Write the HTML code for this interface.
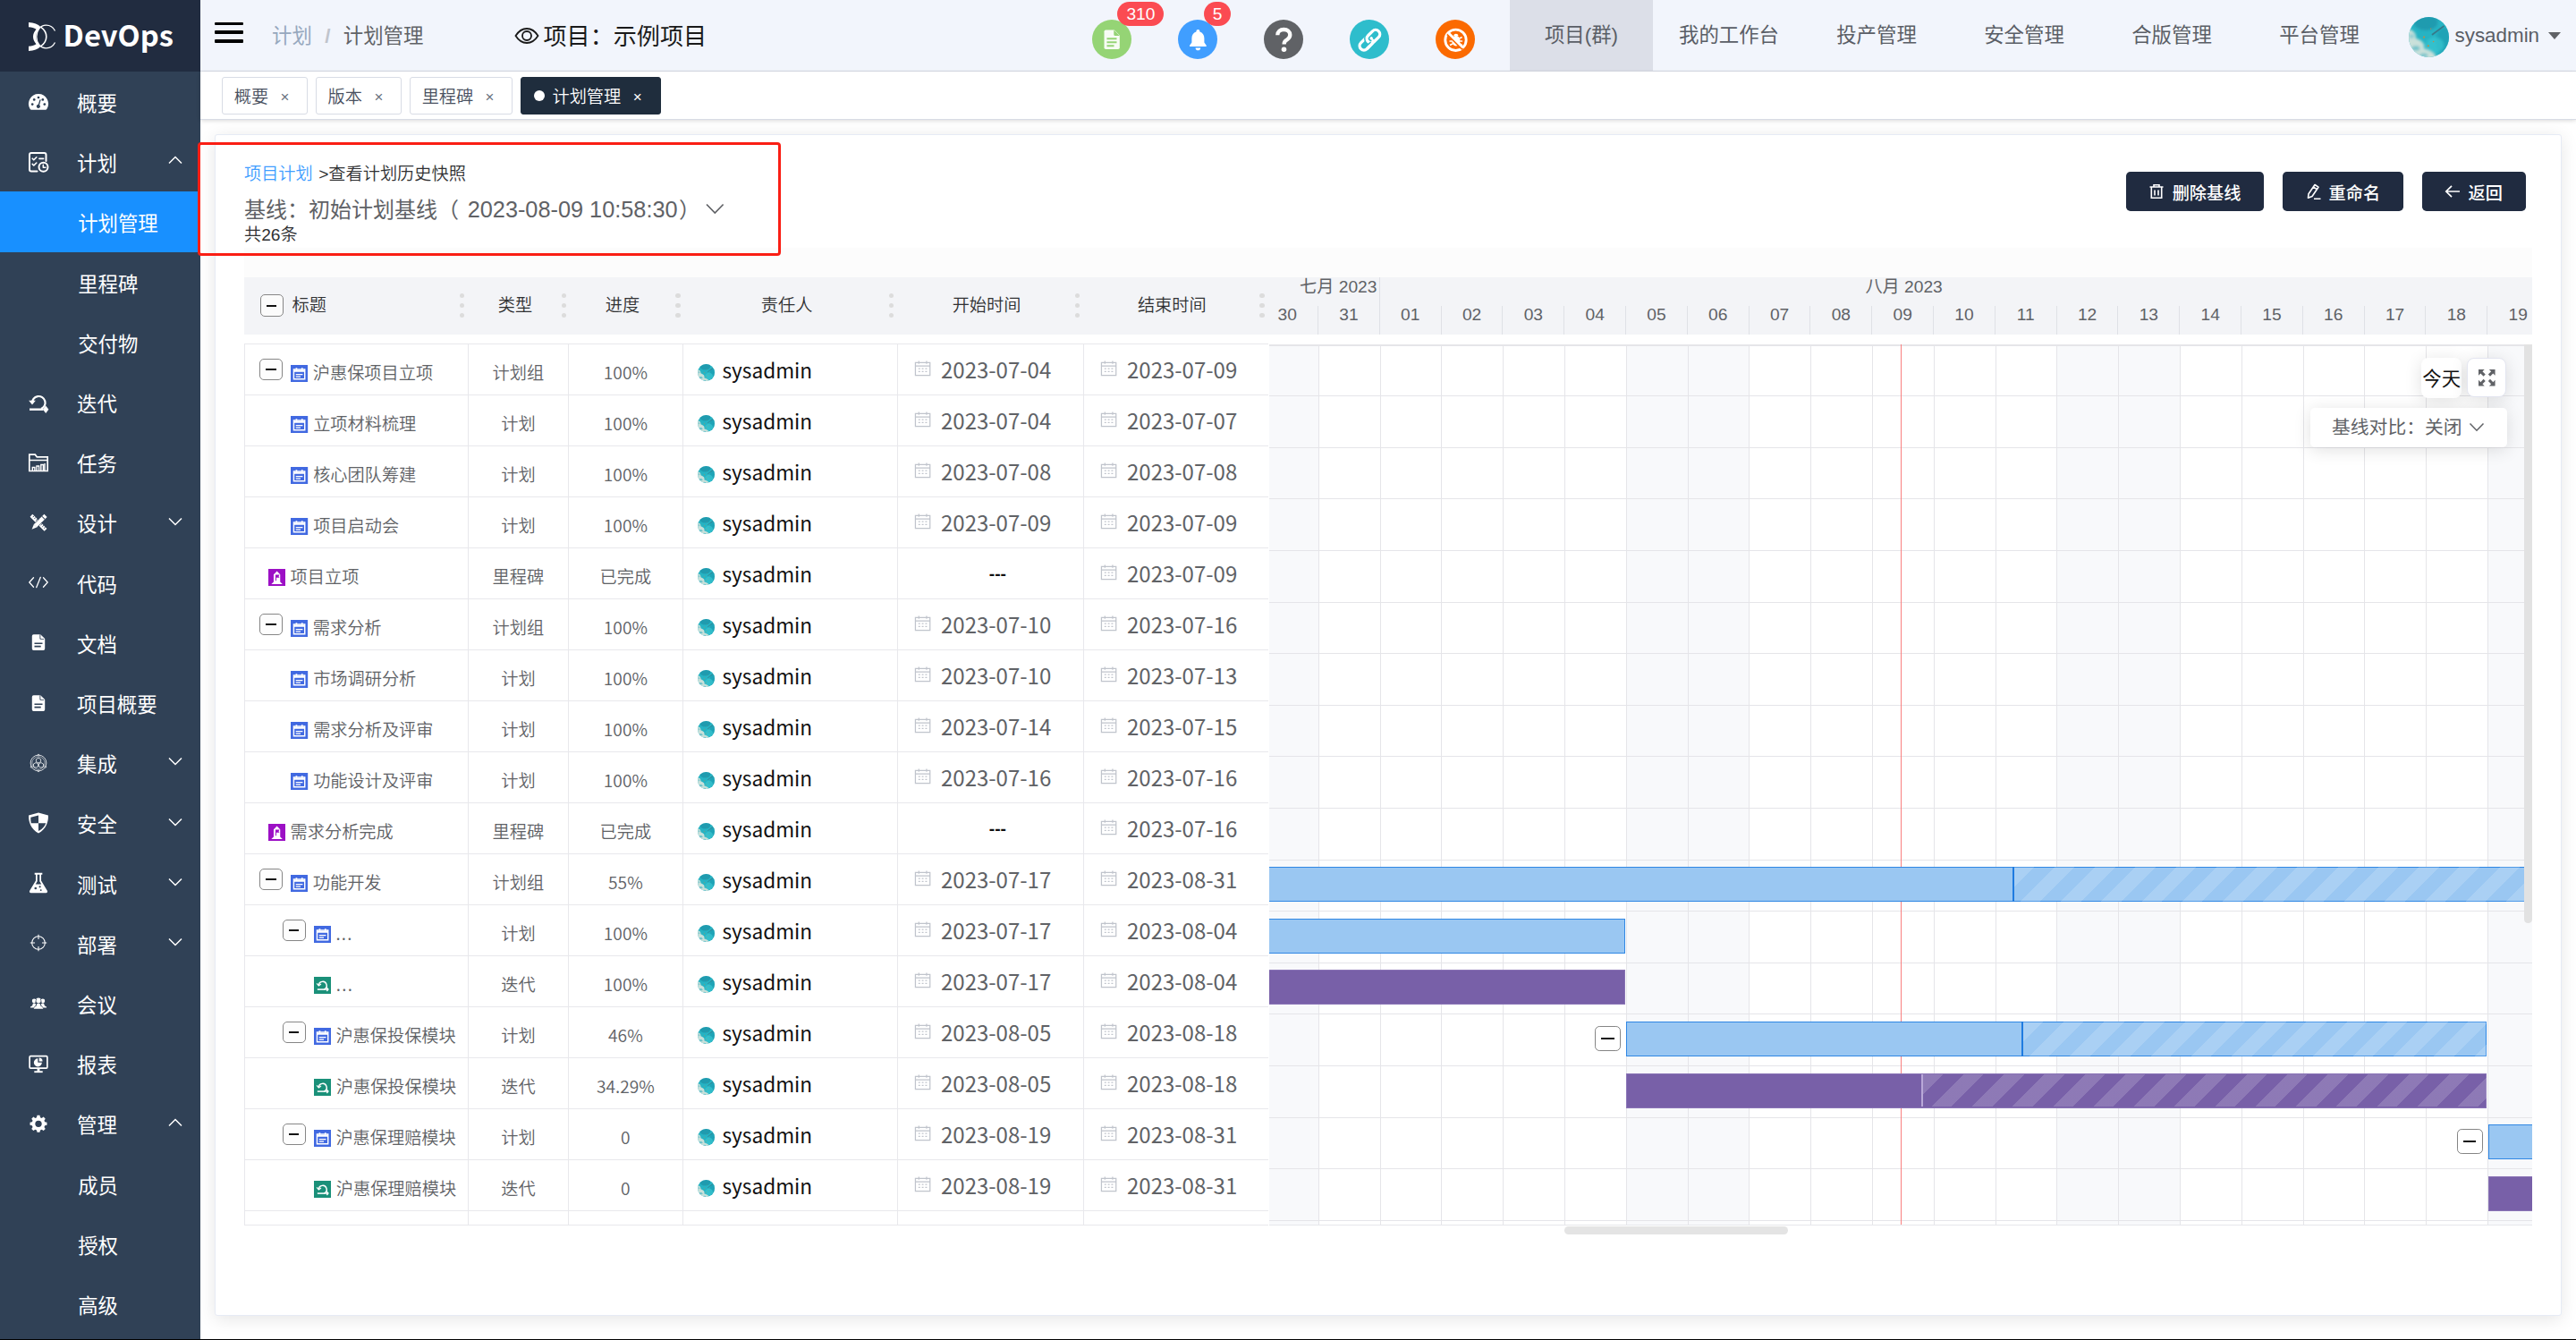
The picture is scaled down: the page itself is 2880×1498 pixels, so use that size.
<!DOCTYPE html>
<html lang="zh-CN">
<head>
<meta charset="utf-8">
<title>计划管理 - DevOps</title>
<style>
*{box-sizing:border-box}
html,body{margin:0;padding:0}
body{width:2880px;height:1498px;overflow:hidden;background:#fff;position:relative;
 font-family:"Liberation Sans","Noto Sans CJK SC",sans-serif;font-size:22.4px;color:#606266}
.abs{position:absolute}
.yh{font-family:"Noto Sans CJK SC","Liberation Sans",sans-serif}
/* sidebar */
#side{position:absolute;left:0;top:0;width:224px;height:1498px;background:#304156}
#logo{position:absolute;left:0;top:0;width:224px;height:80px;background:#212c40}
#logo .t{position:absolute;left:70.6px;top:15px;font:700 32.7px/46px "Noto Sans CJK SC","Liberation Sans",sans-serif;color:#fff;letter-spacing:0}
.mi{position:absolute;left:0;width:224px;height:67.2px;color:#fff;font-size:22.4px;line-height:67.2px;font-family:"Noto Sans CJK SC",sans-serif;font-weight:400}
.mi .tx{position:absolute;left:86px;top:1px;white-space:nowrap}
.mi.sub .tx{left:87.2px}
.mi.act{background:#1890ff}
.mi svg.ic{position:absolute;left:31px;top:21.6px;width:24px;height:24px}
.mi svg.ar{position:absolute;left:188px;top:24.2px;width:16px;height:16px}
/* header */
#hdr{position:absolute;left:224px;top:0;width:2656px;height:80px;background:#f2f5fc;border-bottom:1px solid #d8dce5}
#tags{position:absolute;left:224px;top:80px;width:2656px;height:54.4px;background:#fff;border-bottom:1px solid #d8dce5;box-shadow:0 1.6px 4.8px 0 rgba(0,0,0,.12),0 0 4.8px 0 rgba(0,0,0,.04)}
.tag{font-weight:350;position:absolute;top:6.4px;height:41.6px;border:1px solid #d8dce5;border-radius:3px;background:#fff;color:#495060;font-size:19.2px;line-height:39.6px;white-space:nowrap}
.tag.on{background:#1f2d3d;border-color:#1f2d3d;color:#fff}
.nav{position:absolute;top:0;height:79px;width:160px;text-align:center;line-height:80px;font-size:22.4px;color:#5a5e66}
.nav.on{background:#dcdfe8}
.circ{position:absolute;top:22.3px;width:44px;height:44px;border-radius:50%}
.badge{position:absolute;height:27.4px;line-height:25.4px;border-radius:16px;background:#fb4b52;color:#fff;font-size:19.2px;padding:0 9.6px;text-align:center;border:1px solid #fff0}
/* card */
#card{position:absolute;left:240px;top:150.4px;width:2624px;height:1320.6px;background:#fff;border:1px solid #e6ebf5;border-radius:3px;box-shadow:0 3.2px 19.2px 0 rgba(0,0,0,.1)}
#redbox{position:absolute;left:221px;top:159px;width:652px;height:127px;border:3px solid #fa1e14;border-radius:4px}
.btn{position:absolute;top:192px;height:44px;background:#202b40;border-radius:4.8px;color:#fff;font-size:19.2px;font-weight:500;font-family:"Noto Sans CJK SC",sans-serif;line-height:44px;white-space:nowrap}
/* table */
.th{position:absolute;top:309.6px;height:64px;line-height:64px;font-size:19.2px;font-weight:350;color:#303133;white-space:nowrap}
.dots{position:absolute;top:327.5px;width:6px;height:28px}
.dots i{position:absolute;left:0;width:5.6px;height:5.6px;border-radius:50%;background:#dcdcdc}
.cell{position:absolute;white-space:nowrap;font-size:19.2px;font-weight:350;color:#606266;font-family:"Noto Sans CJK SC","Liberation Sans",sans-serif}
.hl{position:absolute;height:1px;background:#e8e8ec}
.vl{position:absolute;width:1px;background:#e8e8ec}
.exp{position:absolute;width:25.8px;height:24.8px;border:1.4px solid #868686;border-radius:5px;background:#fdfdfd}
.exp:after{content:"";position:absolute;left:5.7px;top:10.6px;width:11.6px;height:2px;background:#111}
.av{position:absolute;width:19.6px;height:19.6px;border-radius:50%;overflow:hidden}
</style>
</head>
<body>

<svg width="0" height="0" style="position:absolute"><defs><filter id="bl" x="-20%" y="-20%" width="140%" height="140%"><feGaussianBlur stdDeviation=".8"/></filter></defs></svg>
<div id="side">
<div id="logo"><svg class="abs" style="left:30px;top:24px;width:34px;height:34px" viewBox="0 0 34 34"><path fill="#fff" d="M2 1c6 .2 10.500 2 13.500 5.200C12 9.500 10 13 10 17s2 7.500 5.500 10.800C12.500 31 8 32.800 2 33v-5.300c3.500-.2 6.300-1 8.500-2.500C8.300 22.600 7 20 7 17s1.300-5.600 3.500-8.200C8.300 7.300 5.500 6.500 2 6.300z"/><path fill="none" stroke="#fff" stroke-width="1.300" d="M31.500 10.500C29.500 6.500 26 4.200 21.500 4.200 15 4.200 10.800 10 10.800 17s4.200 12.800 10.700 12.800c4.500 0 8-2.300 10-6.300"/><path fill="none" stroke="#fff" stroke-width="1.600" d="M15.500 6.200C19.500 9 21.800 12.800 21.800 17s-2.300 8-6.300 10.800"/></svg><div class="t">DevOps</div></div>
<div class="mi" style="top:80.0px"><svg class="ic" viewBox="0 0 24 24" ><path fill="#fff" d="M12 3A11 11 0 0 0 2.7 19.9c.3.5.8.8 1.4.8h15.8c.6 0 1.1-.3 1.4-.8A11 11 0 0 0 12 3z"/><g fill="#304156"><circle cx="5.2" cy="14.6" r="1.35"/><circle cx="7.2" cy="9.4" r="1.35"/><circle cx="12" cy="7" r="1.35"/><circle cx="16.8" cy="9.4" r="1.35"/><circle cx="18.8" cy="14.6" r="1.35"/><path d="M13.5 9.2l1.2.4-1.6 5.6a2.1 2.1 0 1 1-1.3-.4z"/></g></svg><span class="tx">概要</span></div>
<div class="mi" style="top:147.2px"><svg class="ic" viewBox="0 0 24 24" ><g fill="none" stroke="#fff" stroke-width="2" stroke-linecap="round" stroke-linejoin="round"><path d="M10.5 22.5H4a2 2 0 0 1-2-2V4a2 2 0 0 1 2-2h14.5a2 2 0 0 1 2 2v7"/><circle cx="17.5" cy="17.8" r="5"/><path d="M17.3 15.3v3h2.6" stroke-width="1.5"/><path d="M5.2 8.2l1.6 1.6 3-3M5.2 14.4l1.6 1.6 3-3" stroke-width="1.6"/><path d="M13 8.3h4.5" stroke-width="1.8"/></g></svg><span class="tx">计划</span><svg class="ar" viewBox="0 0 16 16"><path d="M1 11.500l7-7 7 7" fill="none" stroke="#fff" stroke-width="1.500"/></svg></div>
<div class="mi sub act" style="top:214.4px"><span class="tx">计划管理</span></div>
<div class="mi sub" style="top:281.6px"><span class="tx">里程碑</span></div>
<div class="mi sub" style="top:348.8px"><span class="tx">交付物</span></div>
<div class="mi" style="top:416.0px"><svg class="ic" viewBox="0 0 24 24" ><g fill="none" stroke="#fff" stroke-width="2.200"><path d="M5 12.800a7.300 7.300 0 1 1 10 6.300"/><path d="M2 19.700h15.500" stroke-width="2.400"/></g><path d="M1.200 9.800h7.600l-3.800 4.600z" fill="#fff"/><path d="M20.200 15.500l3.200 4.200-3.200 4.200-3.200-4.200z" fill="#fff"/></svg><span class="tx">迭代</span></div>
<div class="mi" style="top:483.2px"><svg class="ic" viewBox="0 0 24 24" ><g fill="none" stroke="#fff" stroke-width="1.7"><path d="M1.8 21.5V3.2h6.5l2 2.6h11.9v15.7z"/><path d="M1.8 9.5h20.4" stroke-width="1.5"/><path d="M5.3 21v-3.5h2.6V21M10 21v-5h2.6v5M14.8 21v-6.5h2.6V21M19 21v-8" stroke-width="1.4"/></g></svg><span class="tx">任务</span></div>
<div class="mi" style="top:550.4px"><svg class="ic" viewBox="0 0 24 24" ><g transform="translate(12 12.300) scale(.84) translate(-12 -12)"><g transform="rotate(45 12 12)"><rect x="9.300" y="-1.500" width="5.400" height="19.500" fill="#fff"/><path d="M9.300 18h5.400L12 24.500z" fill="#fff"/><path d="M9.300 2.800h5.400" stroke="#304156" stroke-width="1.200"/><path d="M9.300 17.200h5.400" stroke="#304156" stroke-width="1"/></g><g transform="rotate(-45 12 12)"><rect x="8.900" y="-2" width="6.200" height="28" fill="#304156"/><rect x="9.600" y="-1.500" width="4.800" height="27" fill="#fff"/><path d="M11.800 1.500h2.600M11.800 4.500h2.600M11.800 7.500h2.600M11.800 16.500h2.600M11.800 19.500h2.600M11.800 22.500h2.600" stroke="#304156" stroke-width="1.100"/></g><g transform="rotate(45 12 12)"><rect x="8.700" y="7" width="6.600" height="10" fill="#304156"/><rect x="9.300" y="6" width="5.400" height="12" fill="#fff"/></g></g></svg><span class="tx">设计</span><svg class="ar" viewBox="0 0 16 16"><path d="M1 4.500l7 7 7-7" fill="none" stroke="#fff" stroke-width="1.500"/></svg></div>
<div class="mi" style="top:617.6px"><svg class="ic" viewBox="0 0 24 24" ><g fill="none" stroke="#fff" stroke-width="1.300" stroke-linecap="round" stroke-linejoin="round"><path d="M6.500 6.800L1.800 12l4.700 5.200M17.500 6.800l4.700 5.200-4.700 5.200M14.300 6.300L9.700 17.700"/></g></svg><span class="tx">代码</span></div>
<div class="mi" style="top:684.8px"><svg class="ic" viewBox="0 0 24 24" ><g transform="translate(12 12) scale(0.9) translate(-12 -12)"><path fill="#fff" d="M6 2.2h8.3l5.7 5.7V20a2 2 0 0 1-2 2H6a2 2 0 0 1-2-2V4.2a2 2 0 0 1 2-2z"/><path fill="#304156" d="M13.6 2.2v5.2a1 1 0 0 0 1 1H20l-1-.0V8L14.3 2.2zM7 12.5h10v1.8H7zM7 16.3h8v1.8H7z"/><path fill="#fff" d="M14.6 2.5l5.1 5.1h-4.3a.8.8 0 0 1-.8-.8z"/></g></svg><span class="tx">文档</span></div>
<div class="mi" style="top:752.0px"><svg class="ic" viewBox="0 0 24 24" ><g transform="translate(12 12) scale(0.9) translate(-12 -12)"><path fill="#fff" d="M6 2.2h8.3l5.7 5.7V20a2 2 0 0 1-2 2H6a2 2 0 0 1-2-2V4.2a2 2 0 0 1 2-2z"/><path fill="#304156" d="M13.6 2.2v5.2a1 1 0 0 0 1 1H20l-1-.0V8L14.3 2.2zM7 12.5h10v1.8H7zM7 16.3h8v1.8H7z"/><path fill="#fff" d="M14.6 2.5l5.1 5.1h-4.3a.8.8 0 0 1-.8-.8z"/></g></svg><span class="tx">项目概要</span></div>
<div class="mi" style="top:819.2px"><svg class="ic" viewBox="0 0 24 24" ><g transform="translate(12 12) scale(0.87) translate(-12 -12)"><g fill="none" stroke="#fff" stroke-width="0.9"><circle cx="12" cy="12" r="10.2"/><circle cx="12" cy="12" r="8.2" stroke-width=".6"/><path d="M12 5.5l3 1.6v3.3l-3 1.6-3-1.6V7.100zM8.700 11.5l3 1.600v3.300l-3 1.600-3-1.600v-3.300zM15.300 11.500l3 1.600v3.300l-3 1.600-3-1.600v-3.300z" stroke-width=".9"/><circle cx="12" cy="1.800" r="1" fill="#304156"/><circle cx="3" cy="17" r="1" fill="#304156"/><circle cx="21" cy="17" r="1" fill="#304156"/><circle cx="12" cy="22.200" r="1" fill="#304156"/></g></g></svg><span class="tx">集成</span><svg class="ar" viewBox="0 0 16 16"><path d="M1 4.500l7 7 7-7" fill="none" stroke="#fff" stroke-width="1.500"/></svg></div>
<div class="mi" style="top:886.4px"><svg class="ic" viewBox="0 0 24 24" ><g transform="translate(12 12) scale(1.07) translate(-12 -12)"><path fill="#fff" d="M12 1.300l10.200 2.700c.3 7.500-2.500 14.300-10.200 18.800C4.300 18.300 1.500 11.500 1.800 4z"/><path fill="#304156" d="M12 4v8.200H4.300C3.900 10 3.800 8 3.900 6.100zM12 12.200h7.700c-1 3.300-3.400 6-7.700 8.300z"/></g></svg><span class="tx">安全</span><svg class="ar" viewBox="0 0 16 16"><path d="M1 4.500l7 7 7-7" fill="none" stroke="#fff" stroke-width="1.500"/></svg></div>
<div class="mi" style="top:953.6px"><svg class="ic" viewBox="0 0 24 24" ><g transform="translate(12 12) scale(1.08) translate(-12 -12)"><path fill="#fff" d="M8 1.500h8v2h-1.200v6.300l6.300 10.400c.6 1-.1 2.300-1.300 2.300H4.200c-1.200 0-1.900-1.300-1.300-2.300L9.200 9.800V3.500H8z"/><path fill="#304156" d="M10.800 3.500h2.400v6.800l1.800 3H9l1.800-3z"/><circle cx="9" cy="17.500" r="1.200" fill="#304156"/><circle cx="13.500" cy="16" r="1" fill="#304156"/><circle cx="14.500" cy="19.500" r=".9" fill="#304156"/></g></svg><span class="tx">测试</span><svg class="ar" viewBox="0 0 16 16"><path d="M1 4.500l7 7 7-7" fill="none" stroke="#fff" stroke-width="1.500"/></svg></div>
<div class="mi" style="top:1020.8px"><svg class="ic" viewBox="0 0 24 24" ><g transform="translate(12 12) scale(0.88) translate(-12 -12)"><g fill="none" stroke="#fff" stroke-width="1.200"><circle cx="12" cy="12" r="8.300"/><path d="M12 1.500v6M12 16.500v6M1.500 12h6M16.500 12h6"/></g></g></svg><span class="tx">部署</span><svg class="ar" viewBox="0 0 16 16"><path d="M1 4.500l7 7 7-7" fill="none" stroke="#fff" stroke-width="1.500"/></svg></div>
<div class="mi" style="top:1088.0px"><svg class="ic" viewBox="0 0 24 24" ><g transform="translate(12 12) scale(0.88) translate(-12 -12)"><g fill="#fff"><circle cx="12" cy="7.800" r="3.300"/><path d="M12 11.500c-1.500 0-2.200.8-2.200 2 0 1.800-1.800 3-3.600 3.700v1.300h11.600v-1.300c-1.800-.700-3.600-1.900-3.600-3.700 0-1.200-.700-2-2.200-2z"/><circle cx="6.500" cy="8.500" r="2.700"/><circle cx="17.500" cy="8.500" r="2.700"/><path d="M6.500 11.300c-1.200 0-1.800.6-1.800 1.600 0 1.500-1.500 2.500-3 3v1.300h5.500c1.300-.8 2-1.800 2-3.200 0-1.400-.8-2.700-2.700-2.700zM17.500 11.300c1.200 0 1.800.6 1.800 1.600 0 1.500 1.500 2.500 3 3v1.300h-5.500c-1.300-.8-2-1.800-2-3.200 0-1.400.8-2.700 2.700-2.700z"/></g><g fill="none" stroke="#304156" stroke-width=".9"><path d="M9.300 6.500c-1 2-1 4.500-.2 6.200 0 2-1.500 3.200-3 4M14.700 6.500c1 2 1 4.500.2 6.200 0 2 1.500 3.200 3 4"/></g></g></svg><span class="tx">会议</span></div>
<div class="mi" style="top:1155.2px"><svg class="ic" viewBox="0 0 24 24" ><g transform="translate(12 12) scale(0.94) translate(-12 -12)"><g fill="none" stroke="#fff" stroke-width="1.800"><rect x="1.500" y="3" width="21" height="14.500" rx="1.200"/><path d="M7 21.800h10" stroke-width="2"/><path d="M12 17.500v4"  stroke-width="3"/></g><path fill="#fff" d="M11.300 6v4.800h4.800A4.800 4.800 0 1 1 11.300 6z"/><path fill="#fff" d="M12.700 5.200a4.400 4.400 0 0 1 4.200 4.200h-4.200z"/></g></svg><span class="tx">报表</span></div>
<div class="mi" style="top:1222.4px"><svg class="ic" viewBox="0 0 24 24" ><g transform="translate(12 12) scale(0.87) translate(-12 -12)"><path fill="#fff" d="M10.300 1.500h3.400l.6 2.700 1.900.8 2.300-1.500 2.400 2.400-1.500 2.300.8 1.900 2.700.6v3.400l-2.700.6-.8 1.900 1.500 2.300-2.400 2.400-2.300-1.500-1.900.8-.6 2.700h-3.400l-.6-2.700-1.900-.8-2.300 1.500-2.400-2.400 1.500-2.300-.8-1.900-2.700-.6v-3.400l2.700-.6.8-1.900-1.500-2.300 2.400-2.400 2.300 1.500 1.900-.8z"/><circle cx="12" cy="12.400" r="4.200" fill="#304156"/></g></svg><span class="tx">管理</span><svg class="ar" viewBox="0 0 16 16"><path d="M1 11.500l7-7 7 7" fill="none" stroke="#fff" stroke-width="1.500"/></svg></div>
<div class="mi sub" style="top:1289.6px"><span class="tx">成员</span></div>
<div class="mi sub" style="top:1356.8px"><span class="tx">授权</span></div>
<div class="mi sub" style="top:1424.0px"><span class="tx">高级</span></div>
</div>
<div id="hdr">
<div class="abs" style="left:16px;top:24.500px;width:32px;height:23px"><i class="abs" style="left:0;top:0;width:32px;height:3.500px;background:#000;border-radius:1px"></i><i class="abs" style="left:0;top:9.800px;width:32px;height:3.500px;background:#000;border-radius:1px"></i><i class="abs" style="left:0;top:19.600px;width:32px;height:3.500px;background:#000;border-radius:1px"></i></div>
<div class="abs" style="left:80px;top:0.800px;line-height:80px;font-size:22.400px;white-space:nowrap"><span style="color:#97a8be">计划</span><span style="color:#c0c4cc;margin:0 14.400px;font-weight:700">/</span><span style="color:#606266">计划管理</span></div>
<svg class="abs" style="left:350px;top:26px;width:30px;height:28px" viewBox="0 0 30 28"><path d="M2.500 14C6 8.500 10 6 15 6s9 2.500 12.500 8C24 19.500 20 22 15 22S6 19.500 2.500 14z" fill="none" stroke="#1a1a1a" stroke-width="1.800"/><circle cx="15" cy="14" r="5" fill="none" stroke="#1a1a1a" stroke-width="1.800"/></svg>
<div class="abs" style="left:383.500px;top:0;line-height:82px;font-size:26.100px;color:#1a1a1a;white-space:nowrap">项目：示例项目</div>
<div class="circ" style="left:997.2px;background:#95d475"><svg class="abs" style="left:-0.400px;top:-0.400px;width:44.800px;height:44.800px" viewBox="0 0 44.800 44.800"><path fill="#fff" fill-opacity=".92" d="M15.300 11.500h9.500l6 6v13.700a1.800 1.800 0 0 1-1.800 1.800H15.300a1.800 1.800 0 0 1-1.800-1.800V13.300a1.800 1.800 0 0 1 1.800-1.800z"/><path fill="#95d475" d="M24.300 11.500l6.500 6.500h-5a1.500 1.500 0 0 1-1.500-1.500zM16.500 20.300h11v1.900h-11zM16.500 24.300h11v1.900h-11zM16.500 28.300h8v1.900h-8z"/></svg></div>
<div class="circ" style="left:1093.0px;background:#409eff"><svg class="abs" style="left:-0.400px;top:-0.400px;width:44.800px;height:44.800px" viewBox="0 0 44.800 44.800"><path fill="#fff" d="M22.400 11a2 2 0 0 1 2 2v.5c3.200 1 5 3.800 5 7.300v4.600l2.300 3.300v1.300H13.100v-1.300l2.300-3.300v-4.600c0-3.500 1.800-6.300 5-7.300V13a2 2 0 0 1 2-2zM19.600 31.400h5.600a2.800 2.800 0 0 1-5.600 0z"/></svg></div>
<div class="circ" style="left:1189.2px;background:#606266"><svg class="abs" style="left:-0.400px;top:-0.400px;width:44.800px;height:44.800px" viewBox="0 0 44.800 44.800"><path fill="none" stroke="#fff" stroke-width="4.300" stroke-linecap="butt" d="M15.300 17.300c0-4 3-6.300 7-6.300s7 2.300 7 6.100c0 3.200-2 4.400-4 5.700-1.800 1.200-2.700 2.200-2.700 4.700"/><circle cx="22.500" cy="33.300" r="2.800" fill="#fff"/></svg></div>
<div class="circ" style="left:1285.0px;background:#2ebdcc"><svg class="abs" style="left:-0.400px;top:-0.400px;width:44.800px;height:44.800px" viewBox="0 0 44.800 44.800"><g transform="rotate(-45 22.400 22.700)" fill="none" stroke-linecap="round"><rect x="8.400" y="17.900" width="16.600" height="9.600" rx="4.800" stroke="#fff" stroke-width="3.300"/><rect x="19.800" y="17.900" width="16.600" height="9.600" rx="4.800" stroke="#2ebdcc" stroke-width="6.300"/><rect x="19.800" y="17.900" width="16.600" height="9.600" rx="4.800" stroke="#fff" stroke-width="3.300"/><path d="M17.500 27.500h4" stroke="#2ebdcc" stroke-width="6.300" stroke-linecap="butt"/><path d="M14 27.500h7.500a3.500 3.500 0 0 0 3-1.800" stroke="#fff" stroke-width="3.300"/></g></svg></div>
<div class="circ" style="left:1381.2px;background:#fb6a00"><svg class="abs" style="left:-0.400px;top:-0.400px;width:44.800px;height:44.800px" viewBox="0 0 44.800 44.800"><circle cx="22.500" cy="22.800" r="11.700" fill="none" stroke="#fff" stroke-width="2.900"/><ellipse cx="22.800" cy="23.600" rx="4.700" ry="5.800" fill="#fff"/><path d="M20 18a2.900 2.900 0 0 1 5.600 0z" fill="#fff"/><g stroke="#fff" stroke-width="1.500" fill="none"><path d="M16 19.500l3 1.500M15.500 24h3M16 28.500l3-1.500M29.600 19.500l-3 1.500M30.100 24h-3M29.600 28.500l-3-1.500"/></g><path d="M13.200 16.200l17 17" stroke="#fb6a00" stroke-width="2.600"/><path d="M14.300 14.700l16.500 16.500" stroke="#fff" stroke-width="2.800"/></svg></div>
<div class="badge" style="left:1025.400px;top:1.500px;width:52.100px;padding:0">310</div>
<div class="badge" style="left:1122.300px;top:1.500px;width:29.800px;padding:0">5</div>
<div class="nav on" style="left:1464px">项目(群)</div>
<div class="nav" style="left:1629px">我的工作台</div>
<div class="nav" style="left:1794px">投产管理</div>
<div class="nav" style="left:1959px">安全管理</div>
<div class="nav" style="left:2124px">合版管理</div>
<div class="nav" style="left:2289px">平台管理</div>
<div class="abs" style="left:2468.700px;top:18.900px;width:45px;height:45px;border-radius:50%;overflow:hidden"><svg viewBox="0 0 20 20" style="position:absolute;left:0;top:0;width:100%;height:100%"><rect width="20" height="20" fill="#27b3c3"/><g filter="url(#bl)"><ellipse cx="8.500" cy="2.500" rx="6" ry="4.200" fill="#1a90a6" opacity=".7"/><ellipse cx="17.500" cy="12" rx="4" ry="7" fill="#1c9db0" opacity=".7"/><ellipse cx="13" cy="14" rx="4.500" ry="4" fill="#38c6d2" opacity=".7"/><path d="M-1 5.500C2.500 6.500 4 8.500 3.500 10.500 6.500 11.500 8.500 13.500 7.500 15.500 10 16.500 13 17.500 14.500 21H-1z" fill="#dbe5dd" opacity=".9"/><ellipse cx="3.500" cy="15.500" rx="2" ry="1.200" fill="#4fb6c4" opacity=".7"/><ellipse cx="1.500" cy="9.500" rx="1.200" ry="1" fill="#5fbccb" opacity=".6"/><ellipse cx="7.500" cy="19" rx="2" ry="1" fill="#44b2c2" opacity=".6"/></g><path d="M11.800 8.700L17.300 4.600" stroke="#3d6676" stroke-width=".8" stroke-linecap="round" opacity=".75"/><g fill="#c8893d"><circle cx="7.600" cy="10" r=".45"/><circle cx="9.700" cy="14.300" r=".45"/><circle cx="12.300" cy="12.200" r=".35"/><circle cx="11" cy="5.800" r=".3"/></g></svg></div>
<div class="abs" style="left:2520.500px;top:0;line-height:80px;font-size:22.400px;color:#5a5e66">sysadmin</div>
<div class="abs" style="left:2624.500px;top:35.700px;width:0;height:0;border-left:7.400px solid transparent;border-right:7.400px solid transparent;border-top:8.400px solid #606266"></div>
</div>
<div id="tags">
<div class="tag" style="left:24.3px;width:96.2px"><span class="abs" style="left:12.500px;top:1.800px">概要</span><span class="abs" style="left:64.2px;top:1.500px;font-size:17px;color:#6b7280">×</span></div>
<div class="tag" style="left:129.1px;width:96.4px"><span class="abs" style="left:12.500px;top:1.800px">版本</span><span class="abs" style="left:64.4px;top:1.500px;font-size:17px;color:#6b7280">×</span></div>
<div class="tag" style="left:234.2px;width:115.2px"><span class="abs" style="left:12.500px;top:1.800px">里程碑</span><span class="abs" style="left:83.2px;top:1.500px;font-size:17px;color:#6b7280">×</span></div>
<div class="tag on" style="left:358px;width:156.8px"><i class="abs" style="left:13.500px;top:13.300px;width:12.800px;height:12.800px;border-radius:50%;background:#fff"></i><span class="abs" style="left:34.500px;top:1.800px">计划管理</span><span class="abs" style="left:124.80000000000001px;top:1.500px;font-size:17px">×</span></div>
</div>
<div id="card"></div>
<div class="abs" style="left:273px;top:180.8px;font-size:19.2px;font-weight:350;line-height:28px;white-space:nowrap;color:#303133"><span style="color:#409eff">项目计划</span><span style="margin-left:6.4px">&gt;查看计划历史快照</span></div>
<div class="abs" style="left:273px;top:217px;font-size:24px;line-height:34px;white-space:nowrap;color:#606266">基线：初始计划基线（ <span style="font-size:25.3px;margin-left:3px;margin-right:1.5px">2023-08-09 10:58:30</span>）</div>
<svg class="abs" style="left:788px;top:224px;width:22px;height:18px" viewBox="0 0 22 18"><path d="M2 4.500l9.300 9.500 9.300-9.500" fill="none" stroke="#606266" stroke-width="1.700"/></svg>
<div class="abs" style="left:273px;top:249px;font-size:19.2px;font-weight:350;line-height:28px;white-space:nowrap;color:#303133">共26条</div>
<div class="btn" style="left:2377.2px;width:153.7px"><svg class="abs" style="left:24px;top:12px;width:20px;height:20px" viewBox="0 0 20 20"><g fill="none" stroke="#fff" stroke-width="1.600"><path d="M2.500 5h15M7 5V2.800h6V5M4.300 5v12.200h11.400V5M8 8.500v6M12 8.500v6"/></g></svg><span class="abs" style="left:51.5px;top:1.3px">删除基线</span></div>
<div class="btn" style="left:2552.1px;width:134.7px"><svg class="abs" style="left:24px;top:12px;width:20px;height:20px" viewBox="0 0 20 20"><g fill="none" stroke="#fff" stroke-width="1.600" stroke-linejoin="round"><path d="M12 2.500l4 2.700-7 10.300-4.500 1.700.5-4.400zM11 18.300h7.500M10.300 5l4 2.700"/></g></svg><span class="abs" style="left:51.5px;top:1.3px">重命名</span></div>
<div class="btn" style="left:2708.1px;width:115.7px"><svg class="abs" style="left:24px;top:12px;width:20px;height:20px" viewBox="0 0 20 20"><g fill="none" stroke="#fff" stroke-width="1.700"><path d="M3 10h15M9 3.800L2.800 10 9 16.200"/></g></svg><span class="abs" style="left:51.5px;top:1.3px">返回</span></div>
<div class="abs" style="left:273.2px;top:277px;width:2557.6px;height:32.6px;background:#fcfcfc"></div>
<div class="abs" style="left:273.2px;top:309.6px;width:2557.6px;height:64px;background:#f3f4f7"></div>
<div class="abs" style="left:291.1px;top:329px;width:25.9px;height:24.9px;border:1.4px solid #868686;border-radius:5px;background:#fbfbfb"><i class="abs" style="left:5.7px;top:10.6px;width:11.6px;height:2px;background:#111"></i></div>
<div class="th" style="left:326.5px">标题</div>
<div class="th" style="left:475.9px;width:200px;text-align:center">类型</div>
<div class="th" style="left:595.9px;width:200px;text-align:center">进度</div>
<div class="th" style="left:779.6px;width:200px;text-align:center">责任人</div>
<div class="th" style="left:1003.0px;width:200px;text-align:center">开始时间</div>
<div class="th" style="left:1210.3px;width:200px;text-align:center">结束时间</div>
<div class="dots" style="left:513.5px"><i style="top:0"></i><i style="top:11.1px"></i><i style="top:22.2px"></i></div>
<div class="dots" style="left:627.9px"><i style="top:0"></i><i style="top:11.1px"></i><i style="top:22.2px"></i></div>
<div class="dots" style="left:755.0px"><i style="top:0"></i><i style="top:11.1px"></i><i style="top:22.2px"></i></div>
<div class="dots" style="left:993.5px"><i style="top:0"></i><i style="top:11.1px"></i><i style="top:22.2px"></i></div>
<div class="dots" style="left:1201.5px"><i style="top:0"></i><i style="top:11.1px"></i><i style="top:22.2px"></i></div>
<div class="dots" style="left:1408.3px"><i style="top:0"></i><i style="top:11.1px"></i><i style="top:22.2px"></i></div>
<div class="hl" style="left:273.2px;top:383.9px;width:1145.2px"></div>
<div class="hl" style="left:273.2px;top:440.9px;width:1145.2px"></div>
<div class="hl" style="left:273.2px;top:497.9px;width:1145.2px"></div>
<div class="hl" style="left:273.2px;top:554.9px;width:1145.2px"></div>
<div class="hl" style="left:273.2px;top:611.9px;width:1145.2px"></div>
<div class="hl" style="left:273.2px;top:668.9px;width:1145.2px"></div>
<div class="hl" style="left:273.2px;top:725.9px;width:1145.2px"></div>
<div class="hl" style="left:273.2px;top:782.9px;width:1145.2px"></div>
<div class="hl" style="left:273.2px;top:839.9px;width:1145.2px"></div>
<div class="hl" style="left:273.2px;top:896.9px;width:1145.2px"></div>
<div class="hl" style="left:273.2px;top:953.9px;width:1145.2px"></div>
<div class="hl" style="left:273.2px;top:1010.9px;width:1145.2px"></div>
<div class="hl" style="left:273.2px;top:1067.9px;width:1145.2px"></div>
<div class="hl" style="left:273.2px;top:1124.9px;width:1145.2px"></div>
<div class="hl" style="left:273.2px;top:1181.9px;width:1145.2px"></div>
<div class="hl" style="left:273.2px;top:1238.9px;width:1145.2px"></div>
<div class="hl" style="left:273.2px;top:1295.9px;width:1145.2px"></div>
<div class="hl" style="left:273.2px;top:1352.9px;width:1145.2px"></div>
<div class="hl" style="left:273.2px;top:1368.7px;width:1145.2px"></div>
<div class="vl" style="left:272.7px;top:383.9px;height:985.8px"></div>
<div class="vl" style="left:522.9px;top:383.9px;height:985.8px"></div>
<div class="vl" style="left:634.9px;top:383.9px;height:985.8px"></div>
<div class="vl" style="left:762.9px;top:383.9px;height:985.8px"></div>
<div class="vl" style="left:1002.8px;top:383.9px;height:985.8px"></div>
<div class="vl" style="left:1210.8px;top:383.9px;height:985.8px"></div>
<div class="exp" style="left:290.3px;top:400.6px"></div>
<svg class="abs" style="left:325.0px;top:408.0px;width:19.2px;height:19.2px" viewBox="0 0 20 20"><rect width="20" height="20" fill="#4169e1"/><path d="M3.600 5.200h12.800v11.200H3.600z" fill="none" stroke="#fff" stroke-width="1.500"/><path d="M3.600 6h12.800v2.200H3.600zM5.800 3.300h1.800v2.500H5.800zM12.400 3.300h1.800v2.500h-1.800zM6 10.300h8v1.400H6zM6 13h5.500v1.400H6z" fill="#fff"/></svg>
<div class="cell" style="left:349.8px;top:388.2px;line-height:57px">沪惠保项目立项</div>
<div class="cell" style="left:523.4px;width:112px;text-align:center;top:388.2px;line-height:57px">计划组</div>
<div class="cell" style="left:635.4px;width:128px;text-align:center;top:388.2px;line-height:57px">100%</div>
<div class="av" style="left:779.8px;top:406.8px"><svg viewBox="0 0 20 20" style="position:absolute;left:0;top:0;width:100%;height:100%"><rect width="20" height="20" fill="#27b3c3"/><g filter="url(#bl)"><ellipse cx="8.500" cy="2.500" rx="6" ry="4.200" fill="#1a90a6" opacity=".7"/><ellipse cx="17.500" cy="12" rx="4" ry="7" fill="#1c9db0" opacity=".7"/><ellipse cx="13" cy="14" rx="4.500" ry="4" fill="#38c6d2" opacity=".7"/><path d="M-1 5.500C2.500 6.500 4 8.500 3.500 10.500 6.500 11.500 8.500 13.500 7.500 15.500 10 16.500 13 17.500 14.500 21H-1z" fill="#dbe5dd" opacity=".9"/><ellipse cx="3.500" cy="15.500" rx="2" ry="1.200" fill="#4fb6c4" opacity=".7"/><ellipse cx="1.500" cy="9.500" rx="1.200" ry="1" fill="#5fbccb" opacity=".6"/><ellipse cx="7.500" cy="19" rx="2" ry="1" fill="#44b2c2" opacity=".6"/></g><path d="M11.800 8.700L17.300 4.600" stroke="#3d6676" stroke-width=".8" stroke-linecap="round" opacity=".75"/><g fill="#c8893d"><circle cx="7.600" cy="10" r=".45"/><circle cx="9.700" cy="14.300" r=".45"/><circle cx="12.300" cy="12.200" r=".35"/><circle cx="11" cy="5.800" r=".3"/></g></svg></div>
<div class="cell" style="left:807.5px;top:385.4px;line-height:57px;font-size:22.6px;font-weight:400;color:#111">sysadmin</div>
<svg class="abs" style="left:1022.0px;top:402.0px;width:19.2px;height:19.2px" viewBox="0 0 20 20"><g fill="none" stroke="#c0c4cc" stroke-width="1.300"><path d="M1.500 3.500h17v14.800h-17zM1.500 7.300h17M5.500 1.500v3.500M14.500 1.500v3.500"/><path d="M5 10.500h2M9 10.500h2M13 10.500h2M5 14h2M9 14h2M13 14h2" stroke-width="1.400"/></g></svg>
<div class="cell" style="left:1052px;top:383.9px;line-height:57px;font-size:24px;font-weight:400">2023-07-04</div>
<svg class="abs" style="left:1230.0px;top:402.0px;width:19.2px;height:19.2px" viewBox="0 0 20 20"><g fill="none" stroke="#c0c4cc" stroke-width="1.300"><path d="M1.500 3.500h17v14.800h-17zM1.500 7.300h17M5.500 1.500v3.500M14.500 1.500v3.500"/><path d="M5 10.500h2M9 10.500h2M13 10.500h2M5 14h2M9 14h2M13 14h2" stroke-width="1.400"/></g></svg>
<div class="cell" style="left:1260px;top:383.9px;line-height:57px;font-size:24px;font-weight:400">2023-07-09</div>
<svg class="abs" style="left:325.4px;top:465.0px;width:19.2px;height:19.2px" viewBox="0 0 20 20"><rect width="20" height="20" fill="#4169e1"/><path d="M3.600 5.200h12.800v11.200H3.600z" fill="none" stroke="#fff" stroke-width="1.500"/><path d="M3.600 6h12.800v2.200H3.600zM5.800 3.300h1.800v2.500H5.800zM12.400 3.300h1.800v2.500h-1.800zM6 10.300h8v1.400H6zM6 13h5.500v1.400H6z" fill="#fff"/></svg>
<div class="cell" style="left:350.2px;top:445.2px;line-height:57px">立项材料梳理</div>
<div class="cell" style="left:523.4px;width:112px;text-align:center;top:445.2px;line-height:57px">计划</div>
<div class="cell" style="left:635.4px;width:128px;text-align:center;top:445.2px;line-height:57px">100%</div>
<div class="av" style="left:779.8px;top:463.8px"><svg viewBox="0 0 20 20" style="position:absolute;left:0;top:0;width:100%;height:100%"><rect width="20" height="20" fill="#27b3c3"/><g filter="url(#bl)"><ellipse cx="8.500" cy="2.500" rx="6" ry="4.200" fill="#1a90a6" opacity=".7"/><ellipse cx="17.500" cy="12" rx="4" ry="7" fill="#1c9db0" opacity=".7"/><ellipse cx="13" cy="14" rx="4.500" ry="4" fill="#38c6d2" opacity=".7"/><path d="M-1 5.500C2.500 6.500 4 8.500 3.500 10.500 6.500 11.500 8.500 13.500 7.500 15.500 10 16.500 13 17.500 14.500 21H-1z" fill="#dbe5dd" opacity=".9"/><ellipse cx="3.500" cy="15.500" rx="2" ry="1.200" fill="#4fb6c4" opacity=".7"/><ellipse cx="1.500" cy="9.500" rx="1.200" ry="1" fill="#5fbccb" opacity=".6"/><ellipse cx="7.500" cy="19" rx="2" ry="1" fill="#44b2c2" opacity=".6"/></g><path d="M11.800 8.700L17.300 4.600" stroke="#3d6676" stroke-width=".8" stroke-linecap="round" opacity=".75"/><g fill="#c8893d"><circle cx="7.600" cy="10" r=".45"/><circle cx="9.700" cy="14.300" r=".45"/><circle cx="12.300" cy="12.200" r=".35"/><circle cx="11" cy="5.800" r=".3"/></g></svg></div>
<div class="cell" style="left:807.5px;top:442.4px;line-height:57px;font-size:22.6px;font-weight:400;color:#111">sysadmin</div>
<svg class="abs" style="left:1022.0px;top:459.0px;width:19.2px;height:19.2px" viewBox="0 0 20 20"><g fill="none" stroke="#c0c4cc" stroke-width="1.300"><path d="M1.500 3.500h17v14.800h-17zM1.500 7.300h17M5.500 1.500v3.500M14.500 1.500v3.500"/><path d="M5 10.500h2M9 10.500h2M13 10.500h2M5 14h2M9 14h2M13 14h2" stroke-width="1.400"/></g></svg>
<div class="cell" style="left:1052px;top:440.9px;line-height:57px;font-size:24px;font-weight:400">2023-07-04</div>
<svg class="abs" style="left:1230.0px;top:459.0px;width:19.2px;height:19.2px" viewBox="0 0 20 20"><g fill="none" stroke="#c0c4cc" stroke-width="1.300"><path d="M1.500 3.500h17v14.800h-17zM1.500 7.300h17M5.500 1.500v3.500M14.500 1.500v3.500"/><path d="M5 10.500h2M9 10.500h2M13 10.500h2M5 14h2M9 14h2M13 14h2" stroke-width="1.400"/></g></svg>
<div class="cell" style="left:1260px;top:440.9px;line-height:57px;font-size:24px;font-weight:400">2023-07-07</div>
<svg class="abs" style="left:325.4px;top:522.0px;width:19.2px;height:19.2px" viewBox="0 0 20 20"><rect width="20" height="20" fill="#4169e1"/><path d="M3.600 5.200h12.800v11.200H3.600z" fill="none" stroke="#fff" stroke-width="1.500"/><path d="M3.600 6h12.800v2.200H3.600zM5.800 3.300h1.800v2.500H5.800zM12.400 3.300h1.800v2.500h-1.800zM6 10.300h8v1.400H6zM6 13h5.500v1.400H6z" fill="#fff"/></svg>
<div class="cell" style="left:350.2px;top:502.2px;line-height:57px">核心团队筹建</div>
<div class="cell" style="left:523.4px;width:112px;text-align:center;top:502.2px;line-height:57px">计划</div>
<div class="cell" style="left:635.4px;width:128px;text-align:center;top:502.2px;line-height:57px">100%</div>
<div class="av" style="left:779.8px;top:520.8px"><svg viewBox="0 0 20 20" style="position:absolute;left:0;top:0;width:100%;height:100%"><rect width="20" height="20" fill="#27b3c3"/><g filter="url(#bl)"><ellipse cx="8.500" cy="2.500" rx="6" ry="4.200" fill="#1a90a6" opacity=".7"/><ellipse cx="17.500" cy="12" rx="4" ry="7" fill="#1c9db0" opacity=".7"/><ellipse cx="13" cy="14" rx="4.500" ry="4" fill="#38c6d2" opacity=".7"/><path d="M-1 5.500C2.500 6.500 4 8.500 3.500 10.500 6.500 11.500 8.500 13.500 7.500 15.500 10 16.500 13 17.500 14.500 21H-1z" fill="#dbe5dd" opacity=".9"/><ellipse cx="3.500" cy="15.500" rx="2" ry="1.200" fill="#4fb6c4" opacity=".7"/><ellipse cx="1.500" cy="9.500" rx="1.200" ry="1" fill="#5fbccb" opacity=".6"/><ellipse cx="7.500" cy="19" rx="2" ry="1" fill="#44b2c2" opacity=".6"/></g><path d="M11.800 8.700L17.300 4.600" stroke="#3d6676" stroke-width=".8" stroke-linecap="round" opacity=".75"/><g fill="#c8893d"><circle cx="7.600" cy="10" r=".45"/><circle cx="9.700" cy="14.300" r=".45"/><circle cx="12.300" cy="12.200" r=".35"/><circle cx="11" cy="5.800" r=".3"/></g></svg></div>
<div class="cell" style="left:807.5px;top:499.4px;line-height:57px;font-size:22.6px;font-weight:400;color:#111">sysadmin</div>
<svg class="abs" style="left:1022.0px;top:516.0px;width:19.2px;height:19.2px" viewBox="0 0 20 20"><g fill="none" stroke="#c0c4cc" stroke-width="1.300"><path d="M1.500 3.500h17v14.800h-17zM1.500 7.300h17M5.500 1.500v3.500M14.500 1.500v3.500"/><path d="M5 10.500h2M9 10.500h2M13 10.500h2M5 14h2M9 14h2M13 14h2" stroke-width="1.400"/></g></svg>
<div class="cell" style="left:1052px;top:497.9px;line-height:57px;font-size:24px;font-weight:400">2023-07-08</div>
<svg class="abs" style="left:1230.0px;top:516.0px;width:19.2px;height:19.2px" viewBox="0 0 20 20"><g fill="none" stroke="#c0c4cc" stroke-width="1.300"><path d="M1.500 3.500h17v14.800h-17zM1.500 7.300h17M5.500 1.500v3.500M14.500 1.500v3.500"/><path d="M5 10.500h2M9 10.500h2M13 10.500h2M5 14h2M9 14h2M13 14h2" stroke-width="1.400"/></g></svg>
<div class="cell" style="left:1260px;top:497.9px;line-height:57px;font-size:24px;font-weight:400">2023-07-08</div>
<svg class="abs" style="left:325.4px;top:579.0px;width:19.2px;height:19.2px" viewBox="0 0 20 20"><rect width="20" height="20" fill="#4169e1"/><path d="M3.600 5.200h12.800v11.200H3.600z" fill="none" stroke="#fff" stroke-width="1.500"/><path d="M3.600 6h12.800v2.200H3.600zM5.800 3.300h1.800v2.500H5.800zM12.400 3.300h1.800v2.500h-1.800zM6 10.300h8v1.400H6zM6 13h5.500v1.400H6z" fill="#fff"/></svg>
<div class="cell" style="left:350.2px;top:559.2px;line-height:57px">项目启动会</div>
<div class="cell" style="left:523.4px;width:112px;text-align:center;top:559.2px;line-height:57px">计划</div>
<div class="cell" style="left:635.4px;width:128px;text-align:center;top:559.2px;line-height:57px">100%</div>
<div class="av" style="left:779.8px;top:577.8px"><svg viewBox="0 0 20 20" style="position:absolute;left:0;top:0;width:100%;height:100%"><rect width="20" height="20" fill="#27b3c3"/><g filter="url(#bl)"><ellipse cx="8.500" cy="2.500" rx="6" ry="4.200" fill="#1a90a6" opacity=".7"/><ellipse cx="17.500" cy="12" rx="4" ry="7" fill="#1c9db0" opacity=".7"/><ellipse cx="13" cy="14" rx="4.500" ry="4" fill="#38c6d2" opacity=".7"/><path d="M-1 5.500C2.500 6.500 4 8.500 3.500 10.500 6.500 11.500 8.500 13.500 7.500 15.500 10 16.500 13 17.500 14.500 21H-1z" fill="#dbe5dd" opacity=".9"/><ellipse cx="3.500" cy="15.500" rx="2" ry="1.200" fill="#4fb6c4" opacity=".7"/><ellipse cx="1.500" cy="9.500" rx="1.200" ry="1" fill="#5fbccb" opacity=".6"/><ellipse cx="7.500" cy="19" rx="2" ry="1" fill="#44b2c2" opacity=".6"/></g><path d="M11.800 8.700L17.300 4.600" stroke="#3d6676" stroke-width=".8" stroke-linecap="round" opacity=".75"/><g fill="#c8893d"><circle cx="7.600" cy="10" r=".45"/><circle cx="9.700" cy="14.300" r=".45"/><circle cx="12.300" cy="12.200" r=".35"/><circle cx="11" cy="5.800" r=".3"/></g></svg></div>
<div class="cell" style="left:807.5px;top:556.4px;line-height:57px;font-size:22.6px;font-weight:400;color:#111">sysadmin</div>
<svg class="abs" style="left:1022.0px;top:573.0px;width:19.2px;height:19.2px" viewBox="0 0 20 20"><g fill="none" stroke="#c0c4cc" stroke-width="1.300"><path d="M1.500 3.500h17v14.800h-17zM1.500 7.300h17M5.500 1.500v3.500M14.500 1.500v3.500"/><path d="M5 10.500h2M9 10.500h2M13 10.500h2M5 14h2M9 14h2M13 14h2" stroke-width="1.400"/></g></svg>
<div class="cell" style="left:1052px;top:554.9px;line-height:57px;font-size:24px;font-weight:400">2023-07-09</div>
<svg class="abs" style="left:1230.0px;top:573.0px;width:19.2px;height:19.2px" viewBox="0 0 20 20"><g fill="none" stroke="#c0c4cc" stroke-width="1.300"><path d="M1.500 3.500h17v14.800h-17zM1.500 7.300h17M5.500 1.500v3.500M14.500 1.500v3.500"/><path d="M5 10.500h2M9 10.500h2M13 10.500h2M5 14h2M9 14h2M13 14h2" stroke-width="1.400"/></g></svg>
<div class="cell" style="left:1260px;top:554.9px;line-height:57px;font-size:24px;font-weight:400">2023-07-09</div>
<svg class="abs" style="left:299.8px;top:636.0px;width:19.2px;height:19.2px" viewBox="0 0 20 20"><rect width="20" height="20" fill="#9c10c5"/><path d="M6.200 15.200V6.600L10 2.600l3.800 4v8.600l2.700 2.500H3.500z" fill="#fff"/><path d="M8.300 6.800h4.700l-1 1.700 1 1.700H9.300v3.600h-1z" fill="#9c10c5"/></svg>
<div class="cell" style="left:324.6px;top:616.2px;line-height:57px">项目立项</div>
<div class="cell" style="left:523.4px;width:112px;text-align:center;top:616.2px;line-height:57px">里程碑</div>
<div class="cell" style="left:635.4px;width:128px;text-align:center;top:616.2px;line-height:57px">已完成</div>
<div class="av" style="left:779.8px;top:634.8px"><svg viewBox="0 0 20 20" style="position:absolute;left:0;top:0;width:100%;height:100%"><rect width="20" height="20" fill="#27b3c3"/><g filter="url(#bl)"><ellipse cx="8.500" cy="2.500" rx="6" ry="4.200" fill="#1a90a6" opacity=".7"/><ellipse cx="17.500" cy="12" rx="4" ry="7" fill="#1c9db0" opacity=".7"/><ellipse cx="13" cy="14" rx="4.500" ry="4" fill="#38c6d2" opacity=".7"/><path d="M-1 5.500C2.500 6.500 4 8.500 3.500 10.500 6.500 11.500 8.500 13.500 7.500 15.500 10 16.500 13 17.500 14.500 21H-1z" fill="#dbe5dd" opacity=".9"/><ellipse cx="3.500" cy="15.500" rx="2" ry="1.200" fill="#4fb6c4" opacity=".7"/><ellipse cx="1.500" cy="9.500" rx="1.200" ry="1" fill="#5fbccb" opacity=".6"/><ellipse cx="7.500" cy="19" rx="2" ry="1" fill="#44b2c2" opacity=".6"/></g><path d="M11.800 8.700L17.300 4.600" stroke="#3d6676" stroke-width=".8" stroke-linecap="round" opacity=".75"/><g fill="#c8893d"><circle cx="7.600" cy="10" r=".45"/><circle cx="9.700" cy="14.300" r=".45"/><circle cx="12.300" cy="12.200" r=".35"/><circle cx="11" cy="5.800" r=".3"/></g></svg></div>
<div class="cell" style="left:807.5px;top:613.4px;line-height:57px;font-size:22.6px;font-weight:400;color:#111">sysadmin</div>
<div class="abs" style="left:1105.8px;top:612.8px;line-height:57px;font-size:19.2px;font-weight:700;color:#111;font-family:'Liberation Sans',sans-serif;white-space:nowrap">---</div>
<svg class="abs" style="left:1230.0px;top:630.0px;width:19.2px;height:19.2px" viewBox="0 0 20 20"><g fill="none" stroke="#c0c4cc" stroke-width="1.300"><path d="M1.500 3.500h17v14.800h-17zM1.500 7.300h17M5.500 1.500v3.500M14.500 1.500v3.500"/><path d="M5 10.500h2M9 10.500h2M13 10.500h2M5 14h2M9 14h2M13 14h2" stroke-width="1.400"/></g></svg>
<div class="cell" style="left:1260px;top:611.9px;line-height:57px;font-size:24px;font-weight:400">2023-07-09</div>
<div class="exp" style="left:290.3px;top:685.6px"></div>
<svg class="abs" style="left:325.0px;top:693.0px;width:19.2px;height:19.2px" viewBox="0 0 20 20"><rect width="20" height="20" fill="#4169e1"/><path d="M3.600 5.200h12.800v11.200H3.600z" fill="none" stroke="#fff" stroke-width="1.500"/><path d="M3.600 6h12.800v2.200H3.600zM5.800 3.300h1.800v2.500H5.800zM12.400 3.300h1.800v2.500h-1.800zM6 10.300h8v1.400H6zM6 13h5.500v1.400H6z" fill="#fff"/></svg>
<div class="cell" style="left:349.8px;top:673.2px;line-height:57px">需求分析</div>
<div class="cell" style="left:523.4px;width:112px;text-align:center;top:673.2px;line-height:57px">计划组</div>
<div class="cell" style="left:635.4px;width:128px;text-align:center;top:673.2px;line-height:57px">100%</div>
<div class="av" style="left:779.8px;top:691.8px"><svg viewBox="0 0 20 20" style="position:absolute;left:0;top:0;width:100%;height:100%"><rect width="20" height="20" fill="#27b3c3"/><g filter="url(#bl)"><ellipse cx="8.500" cy="2.500" rx="6" ry="4.200" fill="#1a90a6" opacity=".7"/><ellipse cx="17.500" cy="12" rx="4" ry="7" fill="#1c9db0" opacity=".7"/><ellipse cx="13" cy="14" rx="4.500" ry="4" fill="#38c6d2" opacity=".7"/><path d="M-1 5.500C2.500 6.500 4 8.500 3.500 10.500 6.500 11.500 8.500 13.500 7.500 15.500 10 16.500 13 17.500 14.500 21H-1z" fill="#dbe5dd" opacity=".9"/><ellipse cx="3.500" cy="15.500" rx="2" ry="1.200" fill="#4fb6c4" opacity=".7"/><ellipse cx="1.500" cy="9.500" rx="1.200" ry="1" fill="#5fbccb" opacity=".6"/><ellipse cx="7.500" cy="19" rx="2" ry="1" fill="#44b2c2" opacity=".6"/></g><path d="M11.800 8.700L17.300 4.600" stroke="#3d6676" stroke-width=".8" stroke-linecap="round" opacity=".75"/><g fill="#c8893d"><circle cx="7.600" cy="10" r=".45"/><circle cx="9.700" cy="14.300" r=".45"/><circle cx="12.300" cy="12.200" r=".35"/><circle cx="11" cy="5.800" r=".3"/></g></svg></div>
<div class="cell" style="left:807.5px;top:670.4px;line-height:57px;font-size:22.6px;font-weight:400;color:#111">sysadmin</div>
<svg class="abs" style="left:1022.0px;top:687.0px;width:19.2px;height:19.2px" viewBox="0 0 20 20"><g fill="none" stroke="#c0c4cc" stroke-width="1.300"><path d="M1.500 3.500h17v14.800h-17zM1.500 7.300h17M5.500 1.500v3.500M14.500 1.500v3.500"/><path d="M5 10.500h2M9 10.500h2M13 10.500h2M5 14h2M9 14h2M13 14h2" stroke-width="1.400"/></g></svg>
<div class="cell" style="left:1052px;top:668.9px;line-height:57px;font-size:24px;font-weight:400">2023-07-10</div>
<svg class="abs" style="left:1230.0px;top:687.0px;width:19.2px;height:19.2px" viewBox="0 0 20 20"><g fill="none" stroke="#c0c4cc" stroke-width="1.300"><path d="M1.500 3.500h17v14.800h-17zM1.500 7.300h17M5.500 1.500v3.500M14.500 1.500v3.500"/><path d="M5 10.500h2M9 10.500h2M13 10.500h2M5 14h2M9 14h2M13 14h2" stroke-width="1.400"/></g></svg>
<div class="cell" style="left:1260px;top:668.9px;line-height:57px;font-size:24px;font-weight:400">2023-07-16</div>
<svg class="abs" style="left:325.4px;top:750.0px;width:19.2px;height:19.2px" viewBox="0 0 20 20"><rect width="20" height="20" fill="#4169e1"/><path d="M3.600 5.200h12.800v11.200H3.600z" fill="none" stroke="#fff" stroke-width="1.500"/><path d="M3.600 6h12.800v2.200H3.600zM5.800 3.300h1.800v2.500H5.800zM12.400 3.300h1.800v2.500h-1.800zM6 10.300h8v1.400H6zM6 13h5.500v1.400H6z" fill="#fff"/></svg>
<div class="cell" style="left:350.2px;top:730.2px;line-height:57px">市场调研分析</div>
<div class="cell" style="left:523.4px;width:112px;text-align:center;top:730.2px;line-height:57px">计划</div>
<div class="cell" style="left:635.4px;width:128px;text-align:center;top:730.2px;line-height:57px">100%</div>
<div class="av" style="left:779.8px;top:748.8px"><svg viewBox="0 0 20 20" style="position:absolute;left:0;top:0;width:100%;height:100%"><rect width="20" height="20" fill="#27b3c3"/><g filter="url(#bl)"><ellipse cx="8.500" cy="2.500" rx="6" ry="4.200" fill="#1a90a6" opacity=".7"/><ellipse cx="17.500" cy="12" rx="4" ry="7" fill="#1c9db0" opacity=".7"/><ellipse cx="13" cy="14" rx="4.500" ry="4" fill="#38c6d2" opacity=".7"/><path d="M-1 5.500C2.500 6.500 4 8.500 3.500 10.500 6.500 11.500 8.500 13.500 7.500 15.500 10 16.500 13 17.500 14.500 21H-1z" fill="#dbe5dd" opacity=".9"/><ellipse cx="3.500" cy="15.500" rx="2" ry="1.200" fill="#4fb6c4" opacity=".7"/><ellipse cx="1.500" cy="9.500" rx="1.200" ry="1" fill="#5fbccb" opacity=".6"/><ellipse cx="7.500" cy="19" rx="2" ry="1" fill="#44b2c2" opacity=".6"/></g><path d="M11.800 8.700L17.300 4.600" stroke="#3d6676" stroke-width=".8" stroke-linecap="round" opacity=".75"/><g fill="#c8893d"><circle cx="7.600" cy="10" r=".45"/><circle cx="9.700" cy="14.300" r=".45"/><circle cx="12.300" cy="12.200" r=".35"/><circle cx="11" cy="5.800" r=".3"/></g></svg></div>
<div class="cell" style="left:807.5px;top:727.4px;line-height:57px;font-size:22.6px;font-weight:400;color:#111">sysadmin</div>
<svg class="abs" style="left:1022.0px;top:744.0px;width:19.2px;height:19.2px" viewBox="0 0 20 20"><g fill="none" stroke="#c0c4cc" stroke-width="1.300"><path d="M1.500 3.500h17v14.800h-17zM1.500 7.300h17M5.500 1.500v3.500M14.500 1.500v3.500"/><path d="M5 10.500h2M9 10.500h2M13 10.500h2M5 14h2M9 14h2M13 14h2" stroke-width="1.400"/></g></svg>
<div class="cell" style="left:1052px;top:725.9px;line-height:57px;font-size:24px;font-weight:400">2023-07-10</div>
<svg class="abs" style="left:1230.0px;top:744.0px;width:19.2px;height:19.2px" viewBox="0 0 20 20"><g fill="none" stroke="#c0c4cc" stroke-width="1.300"><path d="M1.500 3.500h17v14.800h-17zM1.500 7.300h17M5.500 1.500v3.500M14.500 1.500v3.500"/><path d="M5 10.500h2M9 10.500h2M13 10.500h2M5 14h2M9 14h2M13 14h2" stroke-width="1.400"/></g></svg>
<div class="cell" style="left:1260px;top:725.9px;line-height:57px;font-size:24px;font-weight:400">2023-07-13</div>
<svg class="abs" style="left:325.4px;top:807.0px;width:19.2px;height:19.2px" viewBox="0 0 20 20"><rect width="20" height="20" fill="#4169e1"/><path d="M3.600 5.200h12.800v11.200H3.600z" fill="none" stroke="#fff" stroke-width="1.500"/><path d="M3.600 6h12.800v2.200H3.600zM5.800 3.300h1.800v2.500H5.800zM12.400 3.300h1.800v2.500h-1.800zM6 10.300h8v1.400H6zM6 13h5.500v1.400H6z" fill="#fff"/></svg>
<div class="cell" style="left:350.2px;top:787.2px;line-height:57px">需求分析及评审</div>
<div class="cell" style="left:523.4px;width:112px;text-align:center;top:787.2px;line-height:57px">计划</div>
<div class="cell" style="left:635.4px;width:128px;text-align:center;top:787.2px;line-height:57px">100%</div>
<div class="av" style="left:779.8px;top:805.8px"><svg viewBox="0 0 20 20" style="position:absolute;left:0;top:0;width:100%;height:100%"><rect width="20" height="20" fill="#27b3c3"/><g filter="url(#bl)"><ellipse cx="8.500" cy="2.500" rx="6" ry="4.200" fill="#1a90a6" opacity=".7"/><ellipse cx="17.500" cy="12" rx="4" ry="7" fill="#1c9db0" opacity=".7"/><ellipse cx="13" cy="14" rx="4.500" ry="4" fill="#38c6d2" opacity=".7"/><path d="M-1 5.500C2.500 6.500 4 8.500 3.500 10.500 6.500 11.500 8.500 13.500 7.500 15.500 10 16.500 13 17.500 14.500 21H-1z" fill="#dbe5dd" opacity=".9"/><ellipse cx="3.500" cy="15.500" rx="2" ry="1.200" fill="#4fb6c4" opacity=".7"/><ellipse cx="1.500" cy="9.500" rx="1.200" ry="1" fill="#5fbccb" opacity=".6"/><ellipse cx="7.500" cy="19" rx="2" ry="1" fill="#44b2c2" opacity=".6"/></g><path d="M11.800 8.700L17.300 4.600" stroke="#3d6676" stroke-width=".8" stroke-linecap="round" opacity=".75"/><g fill="#c8893d"><circle cx="7.600" cy="10" r=".45"/><circle cx="9.700" cy="14.300" r=".45"/><circle cx="12.300" cy="12.200" r=".35"/><circle cx="11" cy="5.800" r=".3"/></g></svg></div>
<div class="cell" style="left:807.5px;top:784.4px;line-height:57px;font-size:22.6px;font-weight:400;color:#111">sysadmin</div>
<svg class="abs" style="left:1022.0px;top:801.0px;width:19.2px;height:19.2px" viewBox="0 0 20 20"><g fill="none" stroke="#c0c4cc" stroke-width="1.300"><path d="M1.500 3.500h17v14.800h-17zM1.500 7.300h17M5.500 1.500v3.500M14.500 1.500v3.500"/><path d="M5 10.500h2M9 10.500h2M13 10.500h2M5 14h2M9 14h2M13 14h2" stroke-width="1.400"/></g></svg>
<div class="cell" style="left:1052px;top:782.9px;line-height:57px;font-size:24px;font-weight:400">2023-07-14</div>
<svg class="abs" style="left:1230.0px;top:801.0px;width:19.2px;height:19.2px" viewBox="0 0 20 20"><g fill="none" stroke="#c0c4cc" stroke-width="1.300"><path d="M1.500 3.500h17v14.800h-17zM1.500 7.300h17M5.500 1.500v3.500M14.500 1.500v3.500"/><path d="M5 10.500h2M9 10.500h2M13 10.500h2M5 14h2M9 14h2M13 14h2" stroke-width="1.400"/></g></svg>
<div class="cell" style="left:1260px;top:782.9px;line-height:57px;font-size:24px;font-weight:400">2023-07-15</div>
<svg class="abs" style="left:325.4px;top:864.0px;width:19.2px;height:19.2px" viewBox="0 0 20 20"><rect width="20" height="20" fill="#4169e1"/><path d="M3.600 5.200h12.800v11.200H3.600z" fill="none" stroke="#fff" stroke-width="1.500"/><path d="M3.600 6h12.800v2.200H3.600zM5.800 3.300h1.800v2.500H5.800zM12.400 3.300h1.800v2.500h-1.800zM6 10.300h8v1.400H6zM6 13h5.500v1.400H6z" fill="#fff"/></svg>
<div class="cell" style="left:350.2px;top:844.2px;line-height:57px">功能设计及评审</div>
<div class="cell" style="left:523.4px;width:112px;text-align:center;top:844.2px;line-height:57px">计划</div>
<div class="cell" style="left:635.4px;width:128px;text-align:center;top:844.2px;line-height:57px">100%</div>
<div class="av" style="left:779.8px;top:862.8px"><svg viewBox="0 0 20 20" style="position:absolute;left:0;top:0;width:100%;height:100%"><rect width="20" height="20" fill="#27b3c3"/><g filter="url(#bl)"><ellipse cx="8.500" cy="2.500" rx="6" ry="4.200" fill="#1a90a6" opacity=".7"/><ellipse cx="17.500" cy="12" rx="4" ry="7" fill="#1c9db0" opacity=".7"/><ellipse cx="13" cy="14" rx="4.500" ry="4" fill="#38c6d2" opacity=".7"/><path d="M-1 5.500C2.500 6.500 4 8.500 3.500 10.500 6.500 11.500 8.500 13.500 7.500 15.500 10 16.500 13 17.500 14.500 21H-1z" fill="#dbe5dd" opacity=".9"/><ellipse cx="3.500" cy="15.500" rx="2" ry="1.200" fill="#4fb6c4" opacity=".7"/><ellipse cx="1.500" cy="9.500" rx="1.200" ry="1" fill="#5fbccb" opacity=".6"/><ellipse cx="7.500" cy="19" rx="2" ry="1" fill="#44b2c2" opacity=".6"/></g><path d="M11.800 8.700L17.300 4.600" stroke="#3d6676" stroke-width=".8" stroke-linecap="round" opacity=".75"/><g fill="#c8893d"><circle cx="7.600" cy="10" r=".45"/><circle cx="9.700" cy="14.300" r=".45"/><circle cx="12.300" cy="12.200" r=".35"/><circle cx="11" cy="5.800" r=".3"/></g></svg></div>
<div class="cell" style="left:807.5px;top:841.4px;line-height:57px;font-size:22.6px;font-weight:400;color:#111">sysadmin</div>
<svg class="abs" style="left:1022.0px;top:858.0px;width:19.2px;height:19.2px" viewBox="0 0 20 20"><g fill="none" stroke="#c0c4cc" stroke-width="1.300"><path d="M1.500 3.500h17v14.800h-17zM1.500 7.300h17M5.500 1.500v3.500M14.500 1.500v3.500"/><path d="M5 10.500h2M9 10.500h2M13 10.500h2M5 14h2M9 14h2M13 14h2" stroke-width="1.400"/></g></svg>
<div class="cell" style="left:1052px;top:839.9px;line-height:57px;font-size:24px;font-weight:400">2023-07-16</div>
<svg class="abs" style="left:1230.0px;top:858.0px;width:19.2px;height:19.2px" viewBox="0 0 20 20"><g fill="none" stroke="#c0c4cc" stroke-width="1.300"><path d="M1.500 3.500h17v14.800h-17zM1.500 7.300h17M5.500 1.500v3.500M14.500 1.500v3.500"/><path d="M5 10.500h2M9 10.500h2M13 10.500h2M5 14h2M9 14h2M13 14h2" stroke-width="1.400"/></g></svg>
<div class="cell" style="left:1260px;top:839.9px;line-height:57px;font-size:24px;font-weight:400">2023-07-16</div>
<svg class="abs" style="left:299.8px;top:921.0px;width:19.2px;height:19.2px" viewBox="0 0 20 20"><rect width="20" height="20" fill="#9c10c5"/><path d="M6.200 15.200V6.600L10 2.600l3.800 4v8.600l2.700 2.500H3.500z" fill="#fff"/><path d="M8.300 6.800h4.700l-1 1.700 1 1.700H9.300v3.600h-1z" fill="#9c10c5"/></svg>
<div class="cell" style="left:324.6px;top:901.2px;line-height:57px">需求分析完成</div>
<div class="cell" style="left:523.4px;width:112px;text-align:center;top:901.2px;line-height:57px">里程碑</div>
<div class="cell" style="left:635.4px;width:128px;text-align:center;top:901.2px;line-height:57px">已完成</div>
<div class="av" style="left:779.8px;top:919.8px"><svg viewBox="0 0 20 20" style="position:absolute;left:0;top:0;width:100%;height:100%"><rect width="20" height="20" fill="#27b3c3"/><g filter="url(#bl)"><ellipse cx="8.500" cy="2.500" rx="6" ry="4.200" fill="#1a90a6" opacity=".7"/><ellipse cx="17.500" cy="12" rx="4" ry="7" fill="#1c9db0" opacity=".7"/><ellipse cx="13" cy="14" rx="4.500" ry="4" fill="#38c6d2" opacity=".7"/><path d="M-1 5.500C2.500 6.500 4 8.500 3.500 10.500 6.500 11.500 8.500 13.500 7.500 15.500 10 16.500 13 17.500 14.500 21H-1z" fill="#dbe5dd" opacity=".9"/><ellipse cx="3.500" cy="15.500" rx="2" ry="1.200" fill="#4fb6c4" opacity=".7"/><ellipse cx="1.500" cy="9.500" rx="1.200" ry="1" fill="#5fbccb" opacity=".6"/><ellipse cx="7.500" cy="19" rx="2" ry="1" fill="#44b2c2" opacity=".6"/></g><path d="M11.800 8.700L17.300 4.600" stroke="#3d6676" stroke-width=".8" stroke-linecap="round" opacity=".75"/><g fill="#c8893d"><circle cx="7.600" cy="10" r=".45"/><circle cx="9.700" cy="14.300" r=".45"/><circle cx="12.300" cy="12.200" r=".35"/><circle cx="11" cy="5.800" r=".3"/></g></svg></div>
<div class="cell" style="left:807.5px;top:898.4px;line-height:57px;font-size:22.6px;font-weight:400;color:#111">sysadmin</div>
<div class="abs" style="left:1105.8px;top:897.8px;line-height:57px;font-size:19.2px;font-weight:700;color:#111;font-family:'Liberation Sans',sans-serif;white-space:nowrap">---</div>
<svg class="abs" style="left:1230.0px;top:915.0px;width:19.2px;height:19.2px" viewBox="0 0 20 20"><g fill="none" stroke="#c0c4cc" stroke-width="1.300"><path d="M1.500 3.500h17v14.800h-17zM1.500 7.300h17M5.500 1.500v3.500M14.500 1.500v3.500"/><path d="M5 10.500h2M9 10.500h2M13 10.500h2M5 14h2M9 14h2M13 14h2" stroke-width="1.400"/></g></svg>
<div class="cell" style="left:1260px;top:896.9px;line-height:57px;font-size:24px;font-weight:400">2023-07-16</div>
<div class="exp" style="left:290.3px;top:970.6px"></div>
<svg class="abs" style="left:325.0px;top:978.0px;width:19.2px;height:19.2px" viewBox="0 0 20 20"><rect width="20" height="20" fill="#4169e1"/><path d="M3.600 5.200h12.800v11.200H3.600z" fill="none" stroke="#fff" stroke-width="1.500"/><path d="M3.600 6h12.800v2.200H3.600zM5.800 3.300h1.800v2.500H5.800zM12.400 3.300h1.800v2.500h-1.800zM6 10.300h8v1.400H6zM6 13h5.500v1.400H6z" fill="#fff"/></svg>
<div class="cell" style="left:349.8px;top:958.2px;line-height:57px">功能开发</div>
<div class="cell" style="left:523.4px;width:112px;text-align:center;top:958.2px;line-height:57px">计划组</div>
<div class="cell" style="left:635.4px;width:128px;text-align:center;top:958.2px;line-height:57px">55%</div>
<div class="av" style="left:779.8px;top:976.8px"><svg viewBox="0 0 20 20" style="position:absolute;left:0;top:0;width:100%;height:100%"><rect width="20" height="20" fill="#27b3c3"/><g filter="url(#bl)"><ellipse cx="8.500" cy="2.500" rx="6" ry="4.200" fill="#1a90a6" opacity=".7"/><ellipse cx="17.500" cy="12" rx="4" ry="7" fill="#1c9db0" opacity=".7"/><ellipse cx="13" cy="14" rx="4.500" ry="4" fill="#38c6d2" opacity=".7"/><path d="M-1 5.500C2.500 6.500 4 8.500 3.500 10.500 6.500 11.500 8.500 13.500 7.500 15.500 10 16.500 13 17.500 14.500 21H-1z" fill="#dbe5dd" opacity=".9"/><ellipse cx="3.500" cy="15.500" rx="2" ry="1.200" fill="#4fb6c4" opacity=".7"/><ellipse cx="1.500" cy="9.500" rx="1.200" ry="1" fill="#5fbccb" opacity=".6"/><ellipse cx="7.500" cy="19" rx="2" ry="1" fill="#44b2c2" opacity=".6"/></g><path d="M11.800 8.700L17.300 4.600" stroke="#3d6676" stroke-width=".8" stroke-linecap="round" opacity=".75"/><g fill="#c8893d"><circle cx="7.600" cy="10" r=".45"/><circle cx="9.700" cy="14.300" r=".45"/><circle cx="12.300" cy="12.200" r=".35"/><circle cx="11" cy="5.800" r=".3"/></g></svg></div>
<div class="cell" style="left:807.5px;top:955.4px;line-height:57px;font-size:22.6px;font-weight:400;color:#111">sysadmin</div>
<svg class="abs" style="left:1022.0px;top:972.0px;width:19.2px;height:19.2px" viewBox="0 0 20 20"><g fill="none" stroke="#c0c4cc" stroke-width="1.300"><path d="M1.500 3.500h17v14.800h-17zM1.500 7.300h17M5.500 1.500v3.500M14.500 1.500v3.500"/><path d="M5 10.500h2M9 10.500h2M13 10.500h2M5 14h2M9 14h2M13 14h2" stroke-width="1.400"/></g></svg>
<div class="cell" style="left:1052px;top:953.9px;line-height:57px;font-size:24px;font-weight:400">2023-07-17</div>
<svg class="abs" style="left:1230.0px;top:972.0px;width:19.2px;height:19.2px" viewBox="0 0 20 20"><g fill="none" stroke="#c0c4cc" stroke-width="1.300"><path d="M1.500 3.500h17v14.800h-17zM1.500 7.300h17M5.500 1.500v3.500M14.500 1.500v3.500"/><path d="M5 10.500h2M9 10.500h2M13 10.500h2M5 14h2M9 14h2M13 14h2" stroke-width="1.400"/></g></svg>
<div class="cell" style="left:1260px;top:953.9px;line-height:57px;font-size:24px;font-weight:400">2023-08-31</div>
<div class="exp" style="left:315.9px;top:1027.6px"></div>
<svg class="abs" style="left:350.6px;top:1035.0px;width:19.2px;height:19.2px" viewBox="0 0 20 20"><rect width="20" height="20" fill="#4169e1"/><path d="M3.600 5.200h12.800v11.200H3.600z" fill="none" stroke="#fff" stroke-width="1.500"/><path d="M3.600 6h12.800v2.200H3.600zM5.800 3.300h1.800v2.500H5.800zM12.400 3.300h1.800v2.500h-1.800zM6 10.300h8v1.400H6zM6 13h5.500v1.400H6z" fill="#fff"/></svg>
<div class="cell" style="left:375.4px;top:1015.2px;line-height:57px;letter-spacing:1.3px">...</div>
<div class="cell" style="left:523.4px;width:112px;text-align:center;top:1015.2px;line-height:57px">计划</div>
<div class="cell" style="left:635.4px;width:128px;text-align:center;top:1015.2px;line-height:57px">100%</div>
<div class="av" style="left:779.8px;top:1033.8px"><svg viewBox="0 0 20 20" style="position:absolute;left:0;top:0;width:100%;height:100%"><rect width="20" height="20" fill="#27b3c3"/><g filter="url(#bl)"><ellipse cx="8.500" cy="2.500" rx="6" ry="4.200" fill="#1a90a6" opacity=".7"/><ellipse cx="17.500" cy="12" rx="4" ry="7" fill="#1c9db0" opacity=".7"/><ellipse cx="13" cy="14" rx="4.500" ry="4" fill="#38c6d2" opacity=".7"/><path d="M-1 5.500C2.500 6.500 4 8.500 3.500 10.500 6.500 11.500 8.500 13.500 7.500 15.500 10 16.500 13 17.500 14.500 21H-1z" fill="#dbe5dd" opacity=".9"/><ellipse cx="3.500" cy="15.500" rx="2" ry="1.200" fill="#4fb6c4" opacity=".7"/><ellipse cx="1.500" cy="9.500" rx="1.200" ry="1" fill="#5fbccb" opacity=".6"/><ellipse cx="7.500" cy="19" rx="2" ry="1" fill="#44b2c2" opacity=".6"/></g><path d="M11.800 8.700L17.300 4.600" stroke="#3d6676" stroke-width=".8" stroke-linecap="round" opacity=".75"/><g fill="#c8893d"><circle cx="7.600" cy="10" r=".45"/><circle cx="9.700" cy="14.300" r=".45"/><circle cx="12.300" cy="12.200" r=".35"/><circle cx="11" cy="5.800" r=".3"/></g></svg></div>
<div class="cell" style="left:807.5px;top:1012.4px;line-height:57px;font-size:22.6px;font-weight:400;color:#111">sysadmin</div>
<svg class="abs" style="left:1022.0px;top:1029.0px;width:19.2px;height:19.2px" viewBox="0 0 20 20"><g fill="none" stroke="#c0c4cc" stroke-width="1.300"><path d="M1.500 3.500h17v14.800h-17zM1.500 7.300h17M5.500 1.500v3.500M14.500 1.500v3.500"/><path d="M5 10.500h2M9 10.500h2M13 10.500h2M5 14h2M9 14h2M13 14h2" stroke-width="1.400"/></g></svg>
<div class="cell" style="left:1052px;top:1010.9px;line-height:57px;font-size:24px;font-weight:400">2023-07-17</div>
<svg class="abs" style="left:1230.0px;top:1029.0px;width:19.2px;height:19.2px" viewBox="0 0 20 20"><g fill="none" stroke="#c0c4cc" stroke-width="1.300"><path d="M1.500 3.500h17v14.800h-17zM1.500 7.300h17M5.500 1.500v3.500M14.500 1.500v3.500"/><path d="M5 10.500h2M9 10.500h2M13 10.500h2M5 14h2M9 14h2M13 14h2" stroke-width="1.400"/></g></svg>
<div class="cell" style="left:1260px;top:1010.9px;line-height:57px;font-size:24px;font-weight:400">2023-08-04</div>
<svg class="abs" style="left:351.0px;top:1092.0px;width:19.2px;height:19.2px" viewBox="0 0 20 20"><rect width="20" height="20" fill="#1a9079"/><g fill="none" stroke="#fff" stroke-width="1.500"><path d="M5.600 10.200a4.600 4.600 0 1 1 6.400 4.200"/><path d="M4 14.700h9.500" stroke-width="1.600"/><path d="M3.300 7.700l2.300 2.700 2.700-2" stroke-width="1.300"/></g><path d="M15.500 12.300l2 2.400-2 2.400-2-2.400z" fill="#fff"/></svg>
<div class="cell" style="left:375.8px;top:1072.2px;line-height:57px;letter-spacing:1.3px">...</div>
<div class="cell" style="left:523.4px;width:112px;text-align:center;top:1072.2px;line-height:57px">迭代</div>
<div class="cell" style="left:635.4px;width:128px;text-align:center;top:1072.2px;line-height:57px">100%</div>
<div class="av" style="left:779.8px;top:1090.8px"><svg viewBox="0 0 20 20" style="position:absolute;left:0;top:0;width:100%;height:100%"><rect width="20" height="20" fill="#27b3c3"/><g filter="url(#bl)"><ellipse cx="8.500" cy="2.500" rx="6" ry="4.200" fill="#1a90a6" opacity=".7"/><ellipse cx="17.500" cy="12" rx="4" ry="7" fill="#1c9db0" opacity=".7"/><ellipse cx="13" cy="14" rx="4.500" ry="4" fill="#38c6d2" opacity=".7"/><path d="M-1 5.500C2.500 6.500 4 8.500 3.500 10.500 6.500 11.500 8.500 13.500 7.500 15.500 10 16.500 13 17.500 14.500 21H-1z" fill="#dbe5dd" opacity=".9"/><ellipse cx="3.500" cy="15.500" rx="2" ry="1.200" fill="#4fb6c4" opacity=".7"/><ellipse cx="1.500" cy="9.500" rx="1.200" ry="1" fill="#5fbccb" opacity=".6"/><ellipse cx="7.500" cy="19" rx="2" ry="1" fill="#44b2c2" opacity=".6"/></g><path d="M11.800 8.700L17.300 4.600" stroke="#3d6676" stroke-width=".8" stroke-linecap="round" opacity=".75"/><g fill="#c8893d"><circle cx="7.600" cy="10" r=".45"/><circle cx="9.700" cy="14.300" r=".45"/><circle cx="12.300" cy="12.200" r=".35"/><circle cx="11" cy="5.800" r=".3"/></g></svg></div>
<div class="cell" style="left:807.5px;top:1069.4px;line-height:57px;font-size:22.6px;font-weight:400;color:#111">sysadmin</div>
<svg class="abs" style="left:1022.0px;top:1086.0px;width:19.2px;height:19.2px" viewBox="0 0 20 20"><g fill="none" stroke="#c0c4cc" stroke-width="1.300"><path d="M1.500 3.500h17v14.800h-17zM1.500 7.300h17M5.500 1.500v3.500M14.500 1.500v3.500"/><path d="M5 10.500h2M9 10.500h2M13 10.500h2M5 14h2M9 14h2M13 14h2" stroke-width="1.400"/></g></svg>
<div class="cell" style="left:1052px;top:1067.9px;line-height:57px;font-size:24px;font-weight:400">2023-07-17</div>
<svg class="abs" style="left:1230.0px;top:1086.0px;width:19.2px;height:19.2px" viewBox="0 0 20 20"><g fill="none" stroke="#c0c4cc" stroke-width="1.300"><path d="M1.500 3.500h17v14.800h-17zM1.500 7.300h17M5.500 1.500v3.500M14.500 1.500v3.500"/><path d="M5 10.500h2M9 10.500h2M13 10.500h2M5 14h2M9 14h2M13 14h2" stroke-width="1.400"/></g></svg>
<div class="cell" style="left:1260px;top:1067.9px;line-height:57px;font-size:24px;font-weight:400">2023-08-04</div>
<div class="exp" style="left:315.9px;top:1141.6px"></div>
<svg class="abs" style="left:350.6px;top:1149.0px;width:19.2px;height:19.2px" viewBox="0 0 20 20"><rect width="20" height="20" fill="#4169e1"/><path d="M3.600 5.200h12.800v11.200H3.600z" fill="none" stroke="#fff" stroke-width="1.500"/><path d="M3.600 6h12.800v2.200H3.600zM5.800 3.300h1.800v2.500H5.800zM12.400 3.300h1.800v2.500h-1.800zM6 10.300h8v1.400H6zM6 13h5.500v1.400H6z" fill="#fff"/></svg>
<div class="cell" style="left:375.4px;top:1129.2px;line-height:57px">沪惠保投保模块</div>
<div class="cell" style="left:523.4px;width:112px;text-align:center;top:1129.2px;line-height:57px">计划</div>
<div class="cell" style="left:635.4px;width:128px;text-align:center;top:1129.2px;line-height:57px">46%</div>
<div class="av" style="left:779.8px;top:1147.8px"><svg viewBox="0 0 20 20" style="position:absolute;left:0;top:0;width:100%;height:100%"><rect width="20" height="20" fill="#27b3c3"/><g filter="url(#bl)"><ellipse cx="8.500" cy="2.500" rx="6" ry="4.200" fill="#1a90a6" opacity=".7"/><ellipse cx="17.500" cy="12" rx="4" ry="7" fill="#1c9db0" opacity=".7"/><ellipse cx="13" cy="14" rx="4.500" ry="4" fill="#38c6d2" opacity=".7"/><path d="M-1 5.500C2.500 6.500 4 8.500 3.500 10.500 6.500 11.500 8.500 13.500 7.500 15.500 10 16.500 13 17.500 14.500 21H-1z" fill="#dbe5dd" opacity=".9"/><ellipse cx="3.500" cy="15.500" rx="2" ry="1.200" fill="#4fb6c4" opacity=".7"/><ellipse cx="1.500" cy="9.500" rx="1.200" ry="1" fill="#5fbccb" opacity=".6"/><ellipse cx="7.500" cy="19" rx="2" ry="1" fill="#44b2c2" opacity=".6"/></g><path d="M11.800 8.700L17.300 4.600" stroke="#3d6676" stroke-width=".8" stroke-linecap="round" opacity=".75"/><g fill="#c8893d"><circle cx="7.600" cy="10" r=".45"/><circle cx="9.700" cy="14.300" r=".45"/><circle cx="12.300" cy="12.200" r=".35"/><circle cx="11" cy="5.800" r=".3"/></g></svg></div>
<div class="cell" style="left:807.5px;top:1126.4px;line-height:57px;font-size:22.6px;font-weight:400;color:#111">sysadmin</div>
<svg class="abs" style="left:1022.0px;top:1143.0px;width:19.2px;height:19.2px" viewBox="0 0 20 20"><g fill="none" stroke="#c0c4cc" stroke-width="1.300"><path d="M1.500 3.500h17v14.800h-17zM1.500 7.300h17M5.500 1.500v3.500M14.500 1.500v3.500"/><path d="M5 10.500h2M9 10.500h2M13 10.500h2M5 14h2M9 14h2M13 14h2" stroke-width="1.400"/></g></svg>
<div class="cell" style="left:1052px;top:1124.9px;line-height:57px;font-size:24px;font-weight:400">2023-08-05</div>
<svg class="abs" style="left:1230.0px;top:1143.0px;width:19.2px;height:19.2px" viewBox="0 0 20 20"><g fill="none" stroke="#c0c4cc" stroke-width="1.300"><path d="M1.500 3.500h17v14.800h-17zM1.500 7.300h17M5.500 1.500v3.500M14.500 1.500v3.500"/><path d="M5 10.500h2M9 10.500h2M13 10.500h2M5 14h2M9 14h2M13 14h2" stroke-width="1.400"/></g></svg>
<div class="cell" style="left:1260px;top:1124.9px;line-height:57px;font-size:24px;font-weight:400">2023-08-18</div>
<svg class="abs" style="left:351.0px;top:1206.0px;width:19.2px;height:19.2px" viewBox="0 0 20 20"><rect width="20" height="20" fill="#1a9079"/><g fill="none" stroke="#fff" stroke-width="1.500"><path d="M5.600 10.200a4.600 4.600 0 1 1 6.400 4.200"/><path d="M4 14.700h9.500" stroke-width="1.600"/><path d="M3.300 7.700l2.300 2.700 2.700-2" stroke-width="1.300"/></g><path d="M15.500 12.300l2 2.400-2 2.400-2-2.400z" fill="#fff"/></svg>
<div class="cell" style="left:375.8px;top:1186.2px;line-height:57px">沪惠保投保模块</div>
<div class="cell" style="left:523.4px;width:112px;text-align:center;top:1186.2px;line-height:57px">迭代</div>
<div class="cell" style="left:635.4px;width:128px;text-align:center;top:1186.2px;line-height:57px">34.29%</div>
<div class="av" style="left:779.8px;top:1204.8px"><svg viewBox="0 0 20 20" style="position:absolute;left:0;top:0;width:100%;height:100%"><rect width="20" height="20" fill="#27b3c3"/><g filter="url(#bl)"><ellipse cx="8.500" cy="2.500" rx="6" ry="4.200" fill="#1a90a6" opacity=".7"/><ellipse cx="17.500" cy="12" rx="4" ry="7" fill="#1c9db0" opacity=".7"/><ellipse cx="13" cy="14" rx="4.500" ry="4" fill="#38c6d2" opacity=".7"/><path d="M-1 5.500C2.500 6.500 4 8.500 3.500 10.500 6.500 11.500 8.500 13.500 7.500 15.500 10 16.500 13 17.500 14.500 21H-1z" fill="#dbe5dd" opacity=".9"/><ellipse cx="3.500" cy="15.500" rx="2" ry="1.200" fill="#4fb6c4" opacity=".7"/><ellipse cx="1.500" cy="9.500" rx="1.200" ry="1" fill="#5fbccb" opacity=".6"/><ellipse cx="7.500" cy="19" rx="2" ry="1" fill="#44b2c2" opacity=".6"/></g><path d="M11.800 8.700L17.300 4.600" stroke="#3d6676" stroke-width=".8" stroke-linecap="round" opacity=".75"/><g fill="#c8893d"><circle cx="7.600" cy="10" r=".45"/><circle cx="9.700" cy="14.300" r=".45"/><circle cx="12.300" cy="12.200" r=".35"/><circle cx="11" cy="5.800" r=".3"/></g></svg></div>
<div class="cell" style="left:807.5px;top:1183.4px;line-height:57px;font-size:22.6px;font-weight:400;color:#111">sysadmin</div>
<svg class="abs" style="left:1022.0px;top:1200.0px;width:19.2px;height:19.2px" viewBox="0 0 20 20"><g fill="none" stroke="#c0c4cc" stroke-width="1.300"><path d="M1.500 3.500h17v14.800h-17zM1.500 7.300h17M5.500 1.500v3.500M14.500 1.500v3.500"/><path d="M5 10.500h2M9 10.500h2M13 10.500h2M5 14h2M9 14h2M13 14h2" stroke-width="1.400"/></g></svg>
<div class="cell" style="left:1052px;top:1181.9px;line-height:57px;font-size:24px;font-weight:400">2023-08-05</div>
<svg class="abs" style="left:1230.0px;top:1200.0px;width:19.2px;height:19.2px" viewBox="0 0 20 20"><g fill="none" stroke="#c0c4cc" stroke-width="1.300"><path d="M1.500 3.500h17v14.800h-17zM1.500 7.300h17M5.500 1.500v3.500M14.500 1.500v3.500"/><path d="M5 10.500h2M9 10.500h2M13 10.500h2M5 14h2M9 14h2M13 14h2" stroke-width="1.400"/></g></svg>
<div class="cell" style="left:1260px;top:1181.9px;line-height:57px;font-size:24px;font-weight:400">2023-08-18</div>
<div class="exp" style="left:315.9px;top:1255.6px"></div>
<svg class="abs" style="left:350.6px;top:1263.0px;width:19.2px;height:19.2px" viewBox="0 0 20 20"><rect width="20" height="20" fill="#4169e1"/><path d="M3.600 5.200h12.800v11.200H3.600z" fill="none" stroke="#fff" stroke-width="1.500"/><path d="M3.600 6h12.800v2.200H3.600zM5.800 3.300h1.800v2.500H5.800zM12.400 3.300h1.800v2.500h-1.800zM6 10.300h8v1.400H6zM6 13h5.500v1.400H6z" fill="#fff"/></svg>
<div class="cell" style="left:375.4px;top:1243.2px;line-height:57px">沪惠保理赔模块</div>
<div class="cell" style="left:523.4px;width:112px;text-align:center;top:1243.2px;line-height:57px">计划</div>
<div class="cell" style="left:635.4px;width:128px;text-align:center;top:1243.2px;line-height:57px">0</div>
<div class="av" style="left:779.8px;top:1261.8px"><svg viewBox="0 0 20 20" style="position:absolute;left:0;top:0;width:100%;height:100%"><rect width="20" height="20" fill="#27b3c3"/><g filter="url(#bl)"><ellipse cx="8.500" cy="2.500" rx="6" ry="4.200" fill="#1a90a6" opacity=".7"/><ellipse cx="17.500" cy="12" rx="4" ry="7" fill="#1c9db0" opacity=".7"/><ellipse cx="13" cy="14" rx="4.500" ry="4" fill="#38c6d2" opacity=".7"/><path d="M-1 5.500C2.500 6.500 4 8.500 3.500 10.500 6.500 11.500 8.500 13.500 7.500 15.500 10 16.500 13 17.500 14.500 21H-1z" fill="#dbe5dd" opacity=".9"/><ellipse cx="3.500" cy="15.500" rx="2" ry="1.200" fill="#4fb6c4" opacity=".7"/><ellipse cx="1.500" cy="9.500" rx="1.200" ry="1" fill="#5fbccb" opacity=".6"/><ellipse cx="7.500" cy="19" rx="2" ry="1" fill="#44b2c2" opacity=".6"/></g><path d="M11.800 8.700L17.300 4.600" stroke="#3d6676" stroke-width=".8" stroke-linecap="round" opacity=".75"/><g fill="#c8893d"><circle cx="7.600" cy="10" r=".45"/><circle cx="9.700" cy="14.300" r=".45"/><circle cx="12.300" cy="12.200" r=".35"/><circle cx="11" cy="5.800" r=".3"/></g></svg></div>
<div class="cell" style="left:807.5px;top:1240.4px;line-height:57px;font-size:22.6px;font-weight:400;color:#111">sysadmin</div>
<svg class="abs" style="left:1022.0px;top:1257.0px;width:19.2px;height:19.2px" viewBox="0 0 20 20"><g fill="none" stroke="#c0c4cc" stroke-width="1.300"><path d="M1.500 3.500h17v14.800h-17zM1.500 7.300h17M5.500 1.500v3.500M14.500 1.500v3.500"/><path d="M5 10.500h2M9 10.500h2M13 10.500h2M5 14h2M9 14h2M13 14h2" stroke-width="1.400"/></g></svg>
<div class="cell" style="left:1052px;top:1238.9px;line-height:57px;font-size:24px;font-weight:400">2023-08-19</div>
<svg class="abs" style="left:1230.0px;top:1257.0px;width:19.2px;height:19.2px" viewBox="0 0 20 20"><g fill="none" stroke="#c0c4cc" stroke-width="1.300"><path d="M1.500 3.500h17v14.800h-17zM1.500 7.300h17M5.500 1.500v3.500M14.500 1.500v3.500"/><path d="M5 10.500h2M9 10.500h2M13 10.500h2M5 14h2M9 14h2M13 14h2" stroke-width="1.400"/></g></svg>
<div class="cell" style="left:1260px;top:1238.9px;line-height:57px;font-size:24px;font-weight:400">2023-08-31</div>
<svg class="abs" style="left:351.0px;top:1320.0px;width:19.2px;height:19.2px" viewBox="0 0 20 20"><rect width="20" height="20" fill="#1a9079"/><g fill="none" stroke="#fff" stroke-width="1.500"><path d="M5.600 10.200a4.600 4.600 0 1 1 6.400 4.200"/><path d="M4 14.700h9.500" stroke-width="1.600"/><path d="M3.300 7.700l2.300 2.700 2.700-2" stroke-width="1.300"/></g><path d="M15.500 12.300l2 2.400-2 2.400-2-2.400z" fill="#fff"/></svg>
<div class="cell" style="left:375.8px;top:1300.2px;line-height:57px">沪惠保理赔模块</div>
<div class="cell" style="left:523.4px;width:112px;text-align:center;top:1300.2px;line-height:57px">迭代</div>
<div class="cell" style="left:635.4px;width:128px;text-align:center;top:1300.2px;line-height:57px">0</div>
<div class="av" style="left:779.8px;top:1318.8px"><svg viewBox="0 0 20 20" style="position:absolute;left:0;top:0;width:100%;height:100%"><rect width="20" height="20" fill="#27b3c3"/><g filter="url(#bl)"><ellipse cx="8.500" cy="2.500" rx="6" ry="4.200" fill="#1a90a6" opacity=".7"/><ellipse cx="17.500" cy="12" rx="4" ry="7" fill="#1c9db0" opacity=".7"/><ellipse cx="13" cy="14" rx="4.500" ry="4" fill="#38c6d2" opacity=".7"/><path d="M-1 5.500C2.500 6.500 4 8.500 3.500 10.500 6.500 11.500 8.500 13.500 7.500 15.500 10 16.500 13 17.500 14.500 21H-1z" fill="#dbe5dd" opacity=".9"/><ellipse cx="3.500" cy="15.500" rx="2" ry="1.200" fill="#4fb6c4" opacity=".7"/><ellipse cx="1.500" cy="9.500" rx="1.200" ry="1" fill="#5fbccb" opacity=".6"/><ellipse cx="7.500" cy="19" rx="2" ry="1" fill="#44b2c2" opacity=".6"/></g><path d="M11.800 8.700L17.300 4.600" stroke="#3d6676" stroke-width=".8" stroke-linecap="round" opacity=".75"/><g fill="#c8893d"><circle cx="7.600" cy="10" r=".45"/><circle cx="9.700" cy="14.300" r=".45"/><circle cx="12.300" cy="12.200" r=".35"/><circle cx="11" cy="5.800" r=".3"/></g></svg></div>
<div class="cell" style="left:807.5px;top:1297.4px;line-height:57px;font-size:22.6px;font-weight:400;color:#111">sysadmin</div>
<svg class="abs" style="left:1022.0px;top:1314.0px;width:19.2px;height:19.2px" viewBox="0 0 20 20"><g fill="none" stroke="#c0c4cc" stroke-width="1.300"><path d="M1.500 3.500h17v14.800h-17zM1.500 7.300h17M5.500 1.500v3.500M14.500 1.500v3.500"/><path d="M5 10.500h2M9 10.500h2M13 10.500h2M5 14h2M9 14h2M13 14h2" stroke-width="1.400"/></g></svg>
<div class="cell" style="left:1052px;top:1295.9px;line-height:57px;font-size:24px;font-weight:400">2023-08-19</div>
<svg class="abs" style="left:1230.0px;top:1314.0px;width:19.2px;height:19.2px" viewBox="0 0 20 20"><g fill="none" stroke="#c0c4cc" stroke-width="1.300"><path d="M1.500 3.500h17v14.800h-17zM1.500 7.300h17M5.500 1.500v3.500M14.500 1.500v3.500"/><path d="M5 10.500h2M9 10.500h2M13 10.500h2M5 14h2M9 14h2M13 14h2" stroke-width="1.400"/></g></svg>
<div class="cell" style="left:1260px;top:1295.9px;line-height:57px;font-size:24px;font-weight:400">2023-08-31</div>
<div class="abs" style="left:1418.7px;top:309.6px;width:1412.1px;height:64px;overflow:hidden;font-size:19.2px;color:#606266">
<div class="abs" style="left:-76.3px;top:0;width:197px;text-align:right;line-height:22px;top:0.8px;white-space:nowrap">七月 2023</div>
<div class="abs" style="left:609.9px;top:0.8px;width:200px;text-align:center;line-height:22px;white-space:nowrap">八月 2023</div>
<div class="abs" style="left:123.2px;top:0;width:1px;height:64px;background:#dfe1e6"></div>
<div class="abs" style="left:-13.9px;top:32.5px;width:68.8px;height:31.5px;line-height:20.5px;text-align:center;border-left:1px solid #dfe1e6;margin-left:-0.5px">30</div>
<div class="abs" style="left:54.9px;top:32.5px;width:68.8px;height:31.5px;line-height:20.5px;text-align:center;border-left:1px solid #dfe1e6;margin-left:-0.5px">31</div>
<div class="abs" style="left:123.7px;top:32.5px;width:68.8px;height:31.5px;line-height:20.5px;text-align:center;border-left:1px solid #dfe1e6;margin-left:-0.5px">01</div>
<div class="abs" style="left:192.5px;top:32.5px;width:68.8px;height:31.5px;line-height:20.5px;text-align:center;border-left:1px solid #dfe1e6;margin-left:-0.5px">02</div>
<div class="abs" style="left:261.3px;top:32.5px;width:68.8px;height:31.5px;line-height:20.5px;text-align:center;border-left:1px solid #dfe1e6;margin-left:-0.5px">03</div>
<div class="abs" style="left:330.1px;top:32.5px;width:68.8px;height:31.5px;line-height:20.5px;text-align:center;border-left:1px solid #dfe1e6;margin-left:-0.5px">04</div>
<div class="abs" style="left:398.9px;top:32.5px;width:68.8px;height:31.5px;line-height:20.5px;text-align:center;border-left:1px solid #dfe1e6;margin-left:-0.5px">05</div>
<div class="abs" style="left:467.7px;top:32.5px;width:68.8px;height:31.5px;line-height:20.5px;text-align:center;border-left:1px solid #dfe1e6;margin-left:-0.5px">06</div>
<div class="abs" style="left:536.5px;top:32.5px;width:68.8px;height:31.5px;line-height:20.5px;text-align:center;border-left:1px solid #dfe1e6;margin-left:-0.5px">07</div>
<div class="abs" style="left:605.3px;top:32.5px;width:68.8px;height:31.5px;line-height:20.5px;text-align:center;border-left:1px solid #dfe1e6;margin-left:-0.5px">08</div>
<div class="abs" style="left:674.1px;top:32.5px;width:68.8px;height:31.5px;line-height:20.5px;text-align:center;border-left:1px solid #dfe1e6;margin-left:-0.5px">09</div>
<div class="abs" style="left:742.9px;top:32.5px;width:68.8px;height:31.5px;line-height:20.5px;text-align:center;border-left:1px solid #dfe1e6;margin-left:-0.5px">10</div>
<div class="abs" style="left:811.7px;top:32.5px;width:68.8px;height:31.5px;line-height:20.5px;text-align:center;border-left:1px solid #dfe1e6;margin-left:-0.5px">11</div>
<div class="abs" style="left:880.5px;top:32.5px;width:68.8px;height:31.5px;line-height:20.5px;text-align:center;border-left:1px solid #dfe1e6;margin-left:-0.5px">12</div>
<div class="abs" style="left:949.3px;top:32.5px;width:68.8px;height:31.5px;line-height:20.5px;text-align:center;border-left:1px solid #dfe1e6;margin-left:-0.5px">13</div>
<div class="abs" style="left:1018.1px;top:32.5px;width:68.8px;height:31.5px;line-height:20.5px;text-align:center;border-left:1px solid #dfe1e6;margin-left:-0.5px">14</div>
<div class="abs" style="left:1086.9px;top:32.5px;width:68.8px;height:31.5px;line-height:20.5px;text-align:center;border-left:1px solid #dfe1e6;margin-left:-0.5px">15</div>
<div class="abs" style="left:1155.7px;top:32.5px;width:68.8px;height:31.5px;line-height:20.5px;text-align:center;border-left:1px solid #dfe1e6;margin-left:-0.5px">16</div>
<div class="abs" style="left:1224.5px;top:32.5px;width:68.8px;height:31.5px;line-height:20.5px;text-align:center;border-left:1px solid #dfe1e6;margin-left:-0.5px">17</div>
<div class="abs" style="left:1293.3px;top:32.5px;width:68.8px;height:31.5px;line-height:20.5px;text-align:center;border-left:1px solid #dfe1e6;margin-left:-0.5px">18</div>
<div class="abs" style="left:1362.1px;top:32.5px;width:68.8px;height:31.5px;line-height:20.5px;text-align:center;border-left:1px solid #dfe1e6;margin-left:-0.5px">19</div>
<div class="abs" style="left:1430.9px;top:32.5px;width:68.8px;height:31.5px;line-height:20.5px;text-align:center;border-left:1px solid #dfe1e6;margin-left:-0.5px">20</div>
</div>
<div class="abs" style="left:1418.7px;top:384.5px;width:1412.1px;height:985.0px;overflow:hidden;border-bottom:1px solid #e6e7eb">
<div class="abs" style="left:-13.2px;top:0;width:68.8px;height:1000px;background:#f8f9fb"></div>
<div class="abs" style="left:399.6px;top:0;width:68.8px;height:1000px;background:#f8f9fb"></div>
<div class="abs" style="left:468.4px;top:0;width:68.8px;height:1000px;background:#f8f9fb"></div>
<div class="abs" style="left:881.2px;top:0;width:68.8px;height:1000px;background:#f8f9fb"></div>
<div class="abs" style="left:950.0px;top:0;width:68.8px;height:1000px;background:#f8f9fb"></div>
<div class="abs" style="left:1362.8px;top:0;width:68.8px;height:1000px;background:#f8f9fb"></div>
<div class="abs" style="left:55.3px;top:0;width:1px;height:1000px;background:#e5e5e9"></div>
<div class="abs" style="left:124.3px;top:0;width:1px;height:1000px;background:#e5e5e9"></div>
<div class="abs" style="left:192.3px;top:0;width:1px;height:1000px;background:#e5e5e9"></div>
<div class="abs" style="left:261.3px;top:0;width:1px;height:1000px;background:#e5e5e9"></div>
<div class="abs" style="left:330.3px;top:0;width:1px;height:1000px;background:#e5e5e9"></div>
<div class="abs" style="left:399.3px;top:0;width:1px;height:1000px;background:#e5e5e9"></div>
<div class="abs" style="left:468.3px;top:0;width:1px;height:1000px;background:#e5e5e9"></div>
<div class="abs" style="left:536.3px;top:0;width:1px;height:1000px;background:#e5e5e9"></div>
<div class="abs" style="left:605.3px;top:0;width:1px;height:1000px;background:#e5e5e9"></div>
<div class="abs" style="left:674.3px;top:0;width:1px;height:1000px;background:#e5e5e9"></div>
<div class="abs" style="left:743.3px;top:0;width:1px;height:1000px;background:#e5e5e9"></div>
<div class="abs" style="left:812.3px;top:0;width:1px;height:1000px;background:#e5e5e9"></div>
<div class="abs" style="left:880.3px;top:0;width:1px;height:1000px;background:#e5e5e9"></div>
<div class="abs" style="left:949.3px;top:0;width:1px;height:1000px;background:#e5e5e9"></div>
<div class="abs" style="left:1018.3px;top:0;width:1px;height:1000px;background:#e5e5e9"></div>
<div class="abs" style="left:1087.3px;top:0;width:1px;height:1000px;background:#e5e5e9"></div>
<div class="abs" style="left:1156.3px;top:0;width:1px;height:1000px;background:#e5e5e9"></div>
<div class="abs" style="left:1224.3px;top:0;width:1px;height:1000px;background:#e5e5e9"></div>
<div class="abs" style="left:1293.3px;top:0;width:1px;height:1000px;background:#e5e5e9"></div>
<div class="abs" style="left:1362.3px;top:0;width:1px;height:1000px;background:#e5e5e9"></div>
<div class="abs" style="left:1431.3px;top:0;width:1px;height:1000px;background:#e5e5e9"></div>
<div class="abs" style="left:0;top:0.5px;width:1500px;height:1.5px;background:#e5e5e9"></div>
<div class="abs" style="left:0;top:57.5px;width:1500px;height:1px;background:#e5e5e9"></div>
<div class="abs" style="left:0;top:115.5px;width:1500px;height:1px;background:#e5e5e9"></div>
<div class="abs" style="left:0;top:172.5px;width:1500px;height:1px;background:#e5e5e9"></div>
<div class="abs" style="left:0;top:230.5px;width:1500px;height:1px;background:#e5e5e9"></div>
<div class="abs" style="left:0;top:288.5px;width:1500px;height:1px;background:#e5e5e9"></div>
<div class="abs" style="left:0;top:345.5px;width:1500px;height:1px;background:#e5e5e9"></div>
<div class="abs" style="left:0;top:403.5px;width:1500px;height:1px;background:#e5e5e9"></div>
<div class="abs" style="left:0;top:460.5px;width:1500px;height:1px;background:#e5e5e9"></div>
<div class="abs" style="left:0;top:518.5px;width:1500px;height:1px;background:#e5e5e9"></div>
<div class="abs" style="left:0;top:576.5px;width:1500px;height:1px;background:#e5e5e9"></div>
<div class="abs" style="left:0;top:633.5px;width:1500px;height:1px;background:#e5e5e9"></div>
<div class="abs" style="left:0;top:691.5px;width:1500px;height:1px;background:#e5e5e9"></div>
<div class="abs" style="left:0;top:748.5px;width:1500px;height:1px;background:#e5e5e9"></div>
<div class="abs" style="left:0;top:806.5px;width:1500px;height:1px;background:#e5e5e9"></div>
<div class="abs" style="left:0;top:864.5px;width:1500px;height:1px;background:#e5e5e9"></div>
<div class="abs" style="left:0;top:921.5px;width:1500px;height:1px;background:#e5e5e9"></div>
<div class="abs" style="left:0;top:979.5px;width:1500px;height:1px;background:#e5e5e9"></div>
<div class="abs" style="left:705.9px;top:0;width:1.4px;height:1000px;background:#f98080"></div>
<div class="abs" style="left:-908.3px;top:584.6px;width:3164.8px;height:39.2px;background:#9ac7f2;border:1.3px solid #2f87e4"><div class="abs" style="left:1739.0px;top:-1.3px;right:-1.3px;height:39.2px;border-left:2px solid #1f7be0;background:repeating-linear-gradient(135deg,rgba(255,255,255,.16) 0,rgba(255,255,255,.16) 16px,rgba(255,255,255,0) 16px,rgba(255,255,255,0) 32px)"></div></div>
<div class="abs" style="left:-908.3px;top:642.2px;width:1306.3px;height:39.2px;background:#9ac7f2;border:1.3px solid #2f87e4"></div>
<div class="abs" style="left:-908.3px;top:699.8px;width:1306.3px;height:39.2px;background:#7860a8;border:1.3px solid #8a74b6"></div>
<div class="abs" style="left:399.7px;top:757.4px;width:961.9px;height:39.2px;background:#9ac7f2;border:1.3px solid #2f87e4"><div class="abs" style="left:440.9px;top:-1.3px;right:-1.3px;height:39.2px;border-left:2px solid #1f7be0;background:repeating-linear-gradient(135deg,rgba(255,255,255,.16) 0,rgba(255,255,255,.16) 16px,rgba(255,255,255,0) 16px,rgba(255,255,255,0) 32px)"></div></div>
<div class="abs" style="left:399.7px;top:815.0px;width:961.9px;height:39.2px;background:#7860a8;border:1.3px solid #8a74b6"><div class="abs" style="left:328.3px;top:0;right:-1.3px;height:36.6px;border-left:2px solid #b9a8d8;background:repeating-linear-gradient(135deg,rgba(255,255,255,.16) 0,rgba(255,255,255,.16) 16px,rgba(255,255,255,0) 16px,rgba(255,255,255,0) 32px)"></div></div>
<div class="abs" style="left:1362.9px;top:872.6px;width:893.6px;height:39.2px;background:#9ac7f2;border:1.3px solid #2f87e4"></div>
<div class="abs" style="left:1362.9px;top:930.2px;width:893.6px;height:39.2px;background:#7860a8;border:1.3px solid #8a74b6"></div>
<div class="abs" style="left:364.6px;top:762.6px;width:28.9px;height:28.4px;border:1.4px solid #858585;border-radius:5.2px;background:#fff"><i class="abs" style="left:5.8px;top:11.8px;width:14.8px;height:2.2px;background:#111"></i></div>
<div class="abs" style="left:1328.2px;top:877.5px;width:28.9px;height:28.4px;border:1.4px solid #858585;border-radius:5.2px;background:#fff"><i class="abs" style="left:5.8px;top:11.8px;width:14.8px;height:2.2px;background:#111"></i></div>
<div class="abs" style="left:1403.5px;top:0;width:8.6px;height:647px;background:#e2e2e2;border-radius:0 0 4.3px 4.3px"></div>
</div>
<div class="abs" style="left:1749px;top:1371px;width:250px;height:9px;border-radius:4.5px;background:#e4e4e4"></div>
<div class="abs" style="left:2707.3px;top:400px;width:44.8px;height:44.8px;border-radius:8px;background:#fff;box-shadow:0 3px 19px rgba(0,0,0,.12);text-align:center;line-height:48px;font-size:21.4px;color:#111;white-space:nowrap">今天</div>
<div class="abs" style="left:2758.4px;top:400.4px;width:44px;height:43.8px;border-radius:8px;background:#fff;border:1px solid #e3e5f0;box-shadow:0 3px 19px rgba(0,0,0,.12)"><svg class="abs" style="left:10.8px;top:10.6px;width:20.6px;height:20.6px" viewBox="0 0 20 20"><g fill="#606266"><path d="M1 1h6.500L5.300 3.200 8.500 6.400 6.400 8.500 3.200 5.300 1 7.500zM19 1v6.500l-2.200-2.200-3.200 3.200-2.100-2.100 3.200-3.200L12.500 1zM1 19v-6.500l2.200 2.200 3.200-3.200 2.100 2.100-3.200 3.200L7.500 19zM19 19h-6.500l2.200-2.200-3.200-3.200 2.100-2.100 3.200 3.200 2.200-2.200z"/></g></svg></div>
<div class="abs" style="left:2583px;top:456px;width:220.3px;height:44px;border-radius:5px;background:#fff;box-shadow:0 3px 19px rgba(0,0,0,.12);font-size:20.8px;line-height:43px;color:#606266;white-space:nowrap"><span class="abs" style="left:24px;top:0">基线对比：关闭</span><svg class="abs" style="left:177px;top:14px;width:18px;height:14px" viewBox="0 0 18 14"><path d="M1.500 3.500l7.500 7.700 7.500-7.700" fill="none" stroke="#606266" stroke-width="1.500"/></svg></div>
<div id="redbox"></div>
<div class="abs" style="left:0;top:1497px;width:2880px;height:1px;background:#000"></div>
</body></html>
